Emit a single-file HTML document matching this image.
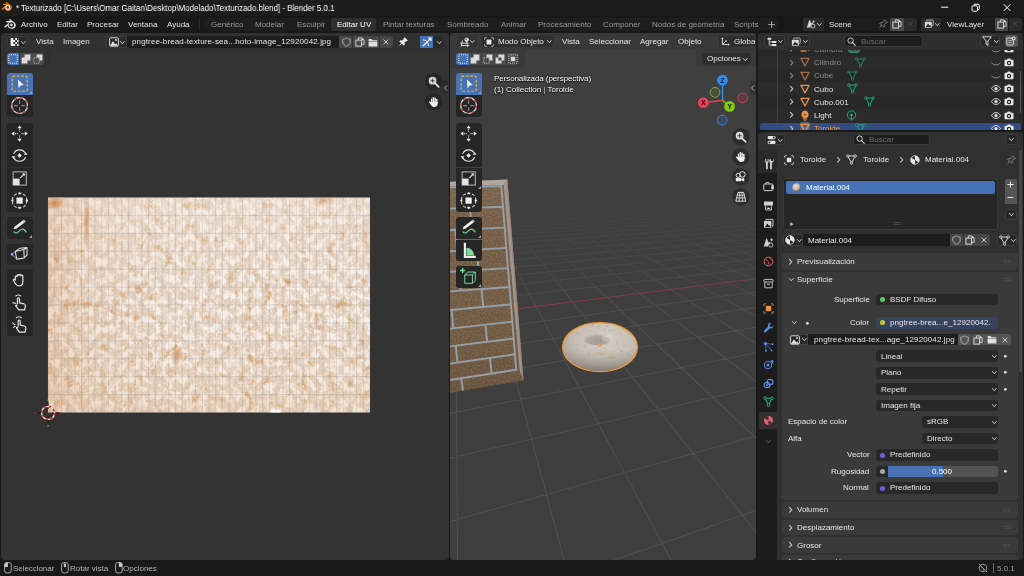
<!DOCTYPE html><html><head><meta charset="utf-8"><title>Blender</title><style>
html,body{margin:0;padding:0;}
body{width:1024px;height:576px;overflow:hidden;background:#191919;position:relative;font-family:"Liberation Sans",sans-serif;}
.t{position:absolute;white-space:nowrap;line-height:12px;height:12px;will-change:transform;}
.b{position:absolute;box-sizing:border-box;}
.area{position:absolute;overflow:hidden;border-radius:4px;}
svg{position:absolute;overflow:visible;}
</style></head><body>
<div class="b" style="left:0px;top:0px;width:1024.00px;height:16.00px;background:#1c1c1c;border-radius:0px;"></div>
<svg style="left:0.6px;top:2.4px;" width="11" height="10" viewBox="0 0 20 18"><path d="M1 12 L9 5.5 H4.5 a1.1 1.1 0 0 1 0-2.2 H11 L9 1.8 a1.1 1.1 0 0 1 1.4-1.7 L18 6 c2 1.8 2.3 5 .5 7.5 c-2.2 3-7 3.6-10 1.4 c-1.6-1.2-2.3-2.7-2.2-4.3 L2.5 13.8 A1.1 1.1 0 0 1 1 12Z" fill="#ea7600"/><circle cx="12.3" cy="9.7" r="4.3" fill="#fff"/><circle cx="12.3" cy="9.7" r="2.5" fill="#265787"/></svg>
<span class="t" style="left:16px;top:2px;color:#fff;font-size:9px;transform:scaleX(.8835);transform-origin:0 50%;">* Texturizado [C:\Users\Omar Gaitan\Desktop\Modelado\Texturizado.blend] - Blender 5.0.1</span>
<svg style="left:0;top:0" width="1024" height="16" viewBox="0 0 1024 16" fill="none" stroke="#fff" stroke-width="1"><path d="M941.2 7.2H948.2"/><rect x="972" y="5.8" width="5.6" height="5.4" rx="1.3"/><path d="M973.8 5.6V5.2a1 1 0 0 1 1-1H978a1.3 1.3 0 0 1 1.3 1.3V8.6a1 1 0 0 1-1 1H977.8"/><path d="M1003.8 4.3L1010.4 10.9M1010.4 4.3L1003.8 10.9"/></svg>
<div class="b" style="left:0px;top:16px;width:1024.00px;height:17.00px;background:#181818;border-radius:0px;"></div>
<svg style="left:3.6px;top:18.5px;" width="12" height="11" viewBox="0 0 20 18"><path d="M1 12 L9 5.5 H4.5 a1.1 1.1 0 0 1 0-2.2 H11 L9 1.8 a1.1 1.1 0 0 1 1.4-1.7 L18 6 c2 1.8 2.3 5 .5 7.5 c-2.2 3-7 3.6-10 1.4 c-1.6-1.2-2.3-2.7-2.2-4.3 L2.5 13.8 A1.1 1.1 0 0 1 1 12Z" fill="#e4e4e4"/><circle cx="12.3" cy="9.7" r="4.4" fill="#181818"/><circle cx="12.3" cy="9.7" r="2.2" fill="#e4e4e4"/></svg>
<span class="t" style="left:20.8px;top:18.50px;color:#e4e4e4;font-size:8px;">Archivo</span>
<span class="t" style="left:57px;top:18.50px;color:#e4e4e4;font-size:8px;">Editar</span>
<span class="t" style="left:86.8px;top:18.50px;color:#e4e4e4;font-size:8px;">Procesar</span>
<span class="t" style="left:128px;top:18.50px;color:#e4e4e4;font-size:8px;">Ventana</span>
<span class="t" style="left:167px;top:18.50px;color:#e4e4e4;font-size:8px;">Ayuda</span>
<div class="b" style="left:198.5px;top:18px;width:1.00px;height:12.00px;background:#2a2a2a;border-radius:0px;"></div>
<div class="b" style="left:204px;top:17.5px;width:574.20px;height:13.50px;background:#1e1e1e;border-radius:3px;"></div>
<div class="b" style="left:331px;top:17.5px;width:45.00px;height:13.00px;background:#303030;border-radius:3px;"></div>
<span class="t" style="left:210.5px;top:18.50px;color:#999999;font-size:8px;">Genérico</span>
<span class="t" style="left:255px;top:18.50px;color:#999999;font-size:8px;">Modelar</span>
<span class="t" style="left:296.8px;top:18.50px;color:#999999;font-size:8px;">Esculpir</span>
<span class="t" style="left:337px;top:18.50px;color:#ffffff;font-size:8px;">Editar UV</span>
<span class="t" style="left:382.8px;top:18.50px;color:#999999;font-size:8px;">Pintar texturas</span>
<span class="t" style="left:447px;top:18.50px;color:#999999;font-size:8px;">Sombreado</span>
<span class="t" style="left:500.5px;top:18.50px;color:#999999;font-size:8px;">Animar</span>
<span class="t" style="left:537.5px;top:18.50px;color:#999999;font-size:8px;">Procesamiento</span>
<span class="t" style="left:602.5px;top:18.50px;color:#999999;font-size:8px;">Componer</span>
<span class="t" style="left:651.5px;top:18.50px;color:#999999;font-size:8px;">Nodos de geometría</span>
<span class="t" style="left:734px;top:18.50px;color:#999999;font-size:8px;">Scripts</span>
<svg style="left:768px;top:21px" width="7.2" height="7.2" viewBox="0 0 7.2 7.2"><path d="M3.6 .2V7M.2 3.6H7" stroke="#b4b4b4" stroke-width=".9"/></svg>
<div class="b" style="left:803px;top:17.5px;width:20.50px;height:13.00px;background:#2b2b2b;border-radius:3px 0 0 3pxpx;"></div>
<div class="b" style="left:823.5px;top:17.5px;width:66.50px;height:13.00px;background:#1d1d1d;border-radius:0px;"></div>
<div class="b" style="left:890px;top:17.5px;width:13.60px;height:13.00px;background:#474747;border-radius:0px;"></div>
<div class="b" style="left:903.8px;top:17.5px;width:13.00px;height:13.00px;background:#2b2b2b;border-radius:0 3px 3px 0px;"></div>
<svg style="left:805.5px;top:19px;" width="10" height="10" viewBox="0 0 10 10"><path d="M1.2 8.6L3.6 1.2L5.2 4.8L6.2 3.6L6.8 5" fill="#d8d8d8" stroke="#d8d8d8" stroke-width=".6" stroke-linejoin="round"/><path d="M1.2 8.6H4.6L4.8 5Z" fill="#d8d8d8"/><circle cx="6.9" cy="7" r="2" fill="none" stroke="#d8d8d8" stroke-width=".9"/><circle cx="7.6" cy="2.6" r="1" fill="#d8d8d8"/></svg>
<svg style="left:816.7px;top:22.7px;" width="4.6" height="3.4" viewBox="0 0 4.6 3.4"><path d="M.4 .5L2.3 2.8L4.199999999999999 .5" fill="none" stroke="#c6c6c6" stroke-width="1.0" stroke-linecap="round" stroke-linejoin="round"/></svg>
<span class="t" style="left:828.8px;top:18.50px;color:#e0e0e0;font-size:8px;">Scene</span>
<svg style="left:878px;top:19.3px;" width="10" height="10" viewBox="0 0 10 10"><g transform="rotate(45 5 5)"><path d="M3.2 .8H6.8V1.8L6.2 2.3V4.6L7.8 6V6.8H2.2V6L3.8 4.6V2.3L3.2 1.8Z" fill="none" stroke="#8a8a8a" stroke-width=".8" stroke-linejoin="round"/><path d="M5 6.8V9.8" stroke="#8a8a8a" stroke-width=".9"/></g></svg>
<svg style="left:892px;top:19.2px;" width="10" height="10" viewBox="0 0 10 10"><path d="M3.3 3.1V.9H6.8L9.1 3.2V7.3H6.5" fill="none" stroke="#e0e0e0" stroke-width=".9" stroke-linejoin="miter"/><path d="M6.7 .7L9.3 3.3H6.7Z" fill="#e0e0e0"/><rect x=".9" y="3.1" width="5.6" height="6" fill="none" stroke="#e0e0e0" stroke-width=".9"/></svg>
<svg style="left:906.3px;top:20.2px;" width="8" height="8" viewBox="0 0 8 8"><path d="M1.4 1.4L6.6 6.6M6.6 1.4L1.4 6.6" stroke="#4a4a4a" stroke-width="0.85"/></svg>
<div class="b" style="left:920.5px;top:17.5px;width:20.50px;height:13.00px;background:#2b2b2b;border-radius:3px 0 0 3pxpx;"></div>
<div class="b" style="left:941px;top:17.5px;width:53.80px;height:13.00px;background:#1d1d1d;border-radius:0px;"></div>
<div class="b" style="left:994.8px;top:17.5px;width:13.60px;height:13.00px;background:#474747;border-radius:0px;"></div>
<div class="b" style="left:1008.6px;top:17.5px;width:13.40px;height:13.00px;background:#2b2b2b;border-radius:0 3px 3px 0px;"></div>
<svg style="left:923.5px;top:19px;" width="10" height="10" viewBox="0 0 10 10"><path d="M2.6 2.2V1.6a.6.6 0 0 1 .6-.6H8.6a.6.6 0 0 1 .6.6V6a.6.6 0 0 1-.6.6H8" fill="none" stroke="#bdbdbd" stroke-width=".9"/><rect x=".8" y="2.8" width="7" height="6" rx=".7" fill="#d8d8d8"/><path d="M1.8 8L4 4.6L5.4 6.6L6.2 5.8L7 8Z" fill="#2b2b2b"/></svg>
<svg style="left:934.7px;top:22.7px;" width="4.6" height="3.4" viewBox="0 0 4.6 3.4"><path d="M.4 .5L2.3 2.8L4.199999999999999 .5" fill="none" stroke="#c6c6c6" stroke-width="1.0" stroke-linecap="round" stroke-linejoin="round"/></svg>
<span class="t" style="left:946.8px;top:18.50px;color:#e0e0e0;font-size:8px;">ViewLayer</span>
<svg style="left:996.5px;top:19.2px;" width="10" height="10" viewBox="0 0 10 10"><path d="M3.3 3.1V.9H6.8L9.1 3.2V7.3H6.5" fill="none" stroke="#e0e0e0" stroke-width=".9" stroke-linejoin="miter"/><path d="M6.7 .7L9.3 3.3H6.7Z" fill="#e0e0e0"/><rect x=".9" y="3.1" width="5.6" height="6" fill="none" stroke="#e0e0e0" stroke-width=".9"/></svg>
<svg style="left:1011px;top:20.2px;" width="8" height="8" viewBox="0 0 8 8"><path d="M1.4 1.4L6.6 6.6M6.6 1.4L1.4 6.6" stroke="#4a4a4a" stroke-width="0.85"/></svg>
<div class="area" style="left:1px;top:33.1px;width:447.6px;height:527.3px;background:#333333;"></div>
<svg width="1024" height="576" style="left:0;top:0" viewBox="0 0 1024 576">
<defs>
<filter id="bread" x="0" y="0" width="100%" height="100%" color-interpolation-filters="sRGB">
 <feFlood flood-color="#e2cfbd" result="base"/>
 <feTurbulence type="fractalNoise" baseFrequency="0.15 0.12" numOctaves="3" seed="7" result="n1"/>
 <feColorMatrix in="n1" type="matrix" values="0 0 0 0 0.97  0 0 0 0 0.935  0 0 0 0 0.905  -5.5 0 0 0 3.0" result="c1"/>
 <feTurbulence type="fractalNoise" baseFrequency="0.11 0.09" numOctaves="3" seed="23" result="n3"/>
 <feColorMatrix in="n3" type="matrix" values="0 0 0 0 0.85  0 0 0 0 0.69  0 0 0 0 0.51  0 0 5 0 -3.0" result="c3"/>
 <feTurbulence type="fractalNoise" baseFrequency="0.4" numOctaves="2" seed="11" result="n2"/>
 <feColorMatrix in="n2" type="matrix" values="0 0 0 0 0.98  0 0 0 0 0.95  0 0 0 0 0.92  0 3 0 0 -1.62" result="c2"/>
 <feMerge><feMergeNode in="base"/><feMergeNode in="c1"/><feMergeNode in="c3"/><feMergeNode in="c2"/></feMerge>
</filter>
<linearGradient id="bl" x1="0" x2="1" y1="0" y2="0"><stop offset="0" stop-color="#c98450" stop-opacity=".55"/><stop offset=".16" stop-color="#d09a6a" stop-opacity=".22"/><stop offset=".4" stop-color="#d8a878" stop-opacity="0"/></linearGradient>
<linearGradient id="bt" x1="0" x2="0" y1="0" y2="1"><stop offset="0" stop-color="#f3e6dc" stop-opacity=".35"/><stop offset=".5" stop-color="#f3e6dc" stop-opacity="0"/><stop offset="1" stop-color="#d9a877" stop-opacity=".18"/></linearGradient>
<radialGradient id="wsp"><stop offset="0" stop-color="#fff" stop-opacity="1"/><stop offset="1" stop-color="#fff" stop-opacity="0"/></radialGradient>
<radialGradient id="osp"><stop offset="0" stop-color="#c67a3c" stop-opacity=".85"/><stop offset="1" stop-color="#c67a3c" stop-opacity="0"/></radialGradient>
<clipPath id="uvc"><rect x="48.0" y="197.5" width="322.0" height="215.0"/></clipPath>
</defs>
<g clip-path="url(#uvc)">
<rect x="48.0" y="197.5" width="322.0" height="215.0" filter="url(#bread)"/>
<rect x="48.0" y="197.5" width="322.0" height="215.0" fill="url(#bt)"/>
<rect x="48.0" y="197.5" width="322.0" height="215.0" fill="url(#bl)" opacity=".4"/>
<ellipse cx="55" cy="203" rx="9" ry="7" fill="url(#osp)"/>
<ellipse cx="86.5" cy="222" rx="3" ry="26" fill="url(#osp)" opacity=".8"/>
<ellipse cx="325" cy="200" rx="14" ry="8" fill="url(#osp)" opacity=".45"/>
<ellipse cx="366" cy="235" rx="5" ry="22" fill="url(#osp)" opacity=".35"/>
<ellipse cx="177" cy="355" rx="6" ry="11" fill="url(#osp)" opacity=".7"/>
<ellipse cx="57" cy="260" rx="4" ry="10" fill="url(#osp)" opacity=".5"/>
<ellipse cx="138" cy="288" rx="4" ry="4" fill="url(#osp)" opacity="0.55"/>
<ellipse cx="136" cy="318" rx="5" ry="4" fill="url(#osp)" opacity="0.5"/>
<ellipse cx="288" cy="282" rx="5" ry="4" fill="url(#osp)" opacity="0.55"/>
<ellipse cx="296" cy="312" rx="4" ry="3" fill="url(#osp)" opacity="0.45"/>
<ellipse cx="316" cy="320" rx="4" ry="4" fill="url(#osp)" opacity="0.5"/>
<ellipse cx="320" cy="328" rx="5" ry="4" fill="url(#osp)" opacity="0.5"/>
<ellipse cx="362" cy="342" rx="4" ry="5" fill="url(#osp)" opacity="0.6"/>
<ellipse cx="158" cy="220" rx="3" ry="3" fill="url(#osp)" opacity="0.45"/>
<ellipse cx="248" cy="318" rx="6" ry="4" fill="url(#osp)" opacity="0.45"/>
<ellipse cx="212" cy="398" rx="5" ry="4" fill="url(#osp)" opacity="0.5"/>
<ellipse cx="350" cy="384" rx="4" ry="5" fill="url(#osp)" opacity="0.5"/>
<ellipse cx="102" cy="268" rx="4" ry="3" fill="url(#osp)" opacity="0.4"/>
<ellipse cx="88" cy="318" rx="4" ry="4" fill="url(#osp)" opacity="0.4"/>
<ellipse cx="230" cy="330" rx="3" ry="3" fill="url(#osp)" opacity="0.4"/>
<ellipse cx="205" cy="300" rx="3" ry="3" fill="url(#osp)" opacity="0.4"/>
<ellipse cx="275.5" cy="412" rx="9" ry="5.5" fill="url(#wsp)"/><ellipse cx="275.5" cy="412.5" rx="5" ry="3" fill="#fff" opacity=".8"/>
</g>
<path d="M48.00 197.5V412.5M54.71 197.5V412.5M61.42 197.5V412.5M68.12 197.5V412.5M74.83 197.5V412.5M81.54 197.5V412.5M88.25 197.5V412.5M94.96 197.5V412.5M101.67 197.5V412.5M108.38 197.5V412.5M115.08 197.5V412.5M121.79 197.5V412.5M128.50 197.5V412.5M135.21 197.5V412.5M141.92 197.5V412.5M148.62 197.5V412.5M155.33 197.5V412.5M162.04 197.5V412.5M168.75 197.5V412.5M175.46 197.5V412.5M182.17 197.5V412.5M188.88 197.5V412.5M195.58 197.5V412.5M202.29 197.5V412.5M209.00 197.5V412.5M215.71 197.5V412.5M222.42 197.5V412.5M229.12 197.5V412.5M235.83 197.5V412.5M242.54 197.5V412.5M249.25 197.5V412.5M255.96 197.5V412.5M262.67 197.5V412.5M269.38 197.5V412.5M276.08 197.5V412.5M282.79 197.5V412.5M289.50 197.5V412.5M296.21 197.5V412.5M302.92 197.5V412.5M309.62 197.5V412.5M316.33 197.5V412.5M323.04 197.5V412.5M329.75 197.5V412.5M336.46 197.5V412.5M343.17 197.5V412.5M349.88 197.5V412.5M356.58 197.5V412.5M363.29 197.5V412.5M370.00 197.5V412.5M48.0 197.50H370.0M48.0 215.42H370.0M48.0 233.33H370.0M48.0 251.25H370.0M48.0 269.17H370.0M48.0 287.08H370.0M48.0 305.00H370.0M48.0 322.92H370.0M48.0 340.83H370.0M48.0 358.75H370.0M48.0 376.67H370.0M48.0 394.58H370.0M48.0 412.50H370.0" stroke="#7a7a7a" stroke-opacity=".36" stroke-width=".55" fill="none"/>
<g fill="none"><path d="M36.6 412.9H44.1M52.1 412.9H59.6M48.1 401.4V408.9M48.1 416.9V424.4" stroke="#141414" stroke-width="1"/><path d="M34.6 412.9H36.3M59.900000000000006 412.9H61.6" stroke="#b0304a" stroke-width="1.2"/><path d="M48.1 399.4V401.09999999999997M48.1 424.7V426.4" stroke="#7fb020" stroke-width="1.2"/><circle cx="48.1" cy="412.9" r="6.5" stroke="#e8e8e8" stroke-width="1.4"/><circle cx="48.1" cy="412.9" r="6.5" stroke="#d42222" stroke-width="1.4" stroke-dasharray="2.55 2.55"/></g>
</svg>
<div class="b" style="left:1px;top:33.1px;width:447.60px;height:17.40px;background:#313131;border-radius:4px 4px 0 0px;"></div>
<div class="b" style="left:1px;top:50px;width:49.00px;height:17.50px;background:#313131;border-radius:0 0 4px 0px;"></div>
<div class="b" style="left:7px;top:36px;width:20.00px;height:11.80px;background:#2a2a2a;border-radius:3px;border:0.5px solid #3b3b3b;"></div>
<svg style="left:10px;top:37px;" width="10" height="10" viewBox="0 0 10 10"><path d="M1.2 1H8.6V9H1.2a.8.8 0 0 1-.6-.8V1.8A.8.8 0 0 1 1.2 1Z" fill="#f0f0f0"/><path d="M3.4 1H5.2V3H3.4ZM7 1H8.6V3H7ZM5.2 3H7V5H5.2ZM3.4 5H5.2V7H3.4ZM7 5H8.6V7H7ZM5.2 7H7V9H5.2Z" fill="#2a2a2a"/></svg>
<svg style="left:20.9px;top:40.6px;" width="4.6" height="3.4" viewBox="0 0 4.6 3.4"><path d="M.4 .5L2.3 2.8L4.199999999999999 .5" fill="none" stroke="#c6c6c6" stroke-width="1.0" stroke-linecap="round" stroke-linejoin="round"/></svg>
<span class="t" style="left:36px;top:36.30px;color:#e0e0e0;font-size:8px;">Vista</span>
<span class="t" style="left:63px;top:36.30px;color:#e0e0e0;font-size:8px;">Imagen</span>
<div class="b" style="left:106.3px;top:36px;width:20.50px;height:11.80px;background:#2a2a2a;border-radius:3px 0 0 3pxpx;border:0.5px solid #3b3b3b;"></div>
<svg style="left:108.5px;top:37px;" width="10" height="10" viewBox="0 0 10 10"><rect x=".6" y=".8" width="8.8" height="8.4" rx="1" fill="none" stroke="#e6e6e6" stroke-width=".9"/><path d="M1 8.8L4 4.2L6.2 7.4L7.2 6.2L9 8.8Z" fill="#e6e6e6"/><circle cx="7" cy="3" r=".9" fill="#e6e6e6"/></svg>
<svg style="left:119.7px;top:40.6px;" width="4.6" height="3.4" viewBox="0 0 4.6 3.4"><path d="M.4 .5L2.3 2.8L4.199999999999999 .5" fill="none" stroke="#c6c6c6" stroke-width="1.0" stroke-linecap="round" stroke-linejoin="round"/></svg>
<div class="b" style="left:127px;top:36px;width:212.00px;height:11.80px;background:#1d1d1d;border-radius:0px;"></div>
<span class="t" style="left:131.8px;top:36.30px;color:#e6e6e6;font-size:8px;letter-spacing:.13px;">pngtree-bread-texture-sea...hoto-image_12920042.jpg</span>
<div class="b" style="left:339.2px;top:36px;width:13.30px;height:11.80px;background:#474747;border-radius:0px;"></div>
<div class="b" style="left:352.9px;top:36px;width:13.10px;height:11.80px;background:#474747;border-radius:0px;"></div>
<div class="b" style="left:366.4px;top:36px;width:13.10px;height:11.80px;background:#474747;border-radius:0px;"></div>
<div class="b" style="left:379.9px;top:36px;width:13.10px;height:11.80px;background:#474747;border-radius:0 3px 3px 0px;"></div>
<svg style="left:341.5px;top:37px;" width="9" height="10" viewBox="0 0 9 10"><path d="M4.5 .8 C3.2 1.8 2 2.1 .8 2.2 V5 C.8 7.2 2.6 8.6 4.5 9.3 C6.4 8.6 8.2 7.2 8.2 5 V2.2 C7 2.1 5.8 1.8 4.5 .8Z" fill="none" stroke="#b0b0b0" stroke-width=".9"/></svg>
<svg style="left:354.6px;top:37px;" width="10" height="10" viewBox="0 0 10 10"><path d="M3.3 3.1V.9H6.8L9.1 3.2V7.3H6.5" fill="none" stroke="#e0e0e0" stroke-width=".9" stroke-linejoin="miter"/><path d="M6.7 .7L9.3 3.3H6.7Z" fill="#e0e0e0"/><rect x=".9" y="3.1" width="5.6" height="6" fill="none" stroke="#e0e0e0" stroke-width=".9"/></svg>
<svg style="left:368px;top:37.5px;" width="10" height="9" viewBox="0 0 10 9"><path d="M.6 1.6a.6.6 0 0 1 .6-.6H3.6L4.6 2.2H8.8a.6.6 0 0 1 .6.6V3.4H.6Z" fill="#e0e0e0"/><rect x=".6" y="4" width="8.8" height="4.6" rx=".6" fill="#e0e0e0"/></svg>
<svg style="left:382.4px;top:38px;" width="8" height="8" viewBox="0 0 8 8"><path d="M1.6 1.6L6.4 6.4M6.4 1.6L1.6 6.4" stroke="#e0e0e0" stroke-width="0.85"/></svg>
<svg style="left:397.5px;top:37px;" width="10" height="10" viewBox="0 0 10 10"><g transform="rotate(45 5 5)"><path d="M3.2 .8H6.8V1.8L6.2 2.3V4.6L7.8 6V6.8H2.2V6L3.8 4.6V2.3L3.2 1.8Z" fill="#f0f0f0" stroke="#f0f0f0" stroke-width=".8" stroke-linejoin="round"/><path d="M5 6.8V9.8" stroke="#f0f0f0" stroke-width=".9"/></g></svg>
<div class="b" style="left:420px;top:36px;width:13.00px;height:11.80px;background:#4772b3;border-radius:3px 0 0 3pxpx;"></div>
<svg style="left:421.5px;top:37px;" width="10" height="10" viewBox="0 0 10 10"><path d="M1 9L9 1M6 1H9V4" fill="none" stroke="#fff" stroke-width="1.1"/><path d="M1 3C4 3 6 5 6.6 9" fill="none" stroke="#fff" stroke-width="1"/></svg>
<div class="b" style="left:433.3px;top:36px;width:11.20px;height:11.80px;background:#2a2a2a;border-radius:0 3px 3px 0px;"></div>
<svg style="left:436.7px;top:40.6px;" width="4.6" height="3.4" viewBox="0 0 4.6 3.4"><path d="M.4 .5L2.3 2.8L4.199999999999999 .5" fill="none" stroke="#c6c6c6" stroke-width="1.0" stroke-linecap="round" stroke-linejoin="round"/></svg>
<div class="b" style="left:7.0px;top:52.7px;width:12.15px;height:12.30px;background:#4772b3;border-radius:0px;border-radius:3px 0 0 3px;"></div>
<svg style="left:8.3px;top:53.900000000000006px;" width="10" height="10" viewBox="0 0 10 10"><rect x=".8" y=".8" width="8.4" height="8.4" fill="none" stroke="#e8eefb" stroke-width="1" stroke-dasharray="1 1.1"/></svg>
<div class="b" style="left:19.55px;top:52.7px;width:12.15px;height:12.30px;background:#4a4a4a;border-radius:0px;border-radius:0;"></div>
<svg style="left:20.85px;top:53.900000000000006px;" width="10" height="10" viewBox="0 0 10 10"><path d="M3.6 .6H9.4V6.4H6.4V9.4H.6V3.6H3.6Z" fill="#dcdcdc"/></svg>
<div class="b" style="left:32.1px;top:52.7px;width:12.15px;height:12.30px;background:#4a4a4a;border-radius:0px;border-radius:0 3px 3px 0;"></div>
<svg style="left:33.4px;top:53.900000000000006px;" width="10" height="10" viewBox="0 0 10 10"><path d="M3.6 .6H9.4V6.4H6.4V3.6H3.6Z" fill="#dcdcdc"/><rect x=".8" y="3.8" width="5.4" height="5.4" fill="none" stroke="#cfcfcf" stroke-width=".9" stroke-dasharray="1 1.1"/></svg>
<div class="b" style="left:7px;top:73px;width:25.70px;height:22.00px;background:#4772b3;border-radius:0px;border-radius:3px 3px 0 0;"></div><svg style="left:9.550000000000002px;top:74.0px;" width="19.2" height="19.2" viewBox="0 0 16 16"><rect x="1.8" y="1.8" width="12.6" height="12.6" rx="1.4" fill="none" stroke="#eab23f" stroke-width="1" stroke-dasharray="2.3 1.3" stroke-dashoffset="1.1"/><path d="M6.6 4.6L11.5 9.1L8.9 9.5L7.1 12Z" fill="#f2f2f2"/></svg><svg style="left:28.500000000000004px;top:90.8px;" width="3" height="3" viewBox="0 0 3 3"><path d="M3 0V3H0Z" fill="#9a9a9a"/></svg>
<div class="b" style="left:7px;top:95.4px;width:25.70px;height:22.10px;background:#262626;border-radius:0px;border-radius:0 0 3px 3px;"></div><svg style="left:9.550000000000002px;top:96.45px;" width="19.2" height="19.2" viewBox="0 0 16 16"><circle cx="8" cy="8" r="6.6" fill="none" stroke="#f0f0f0" stroke-width="1"/><circle cx="8" cy="8" r="6.6" fill="none" stroke="#c93838" stroke-width="1" stroke-dasharray="2.59 2.59"/><path d="M8 3.4V6.6M8 9.4V12.6M3.4 8H6.6M9.4 8H12.6" stroke="#8a8a8a" stroke-width=".9"/></svg>
<div class="b" style="left:7px;top:122.5px;width:25.70px;height:22.10px;background:#262626;border-radius:0px;border-radius:3px 3px 0 0;"></div><svg style="left:9.550000000000002px;top:123.55000000000001px;" width="19.2" height="19.2" viewBox="0 0 16 16"><path d="M8 1.2L9.8 3.6H6.2ZM8 14.8L9.8 12.4H6.2ZM1.2 8L3.6 6.2V9.8ZM14.8 8L12.4 6.2V9.8Z" fill="#eee"/><path d="M8 4V6.4M8 9.6V12M4 8H6.4M9.6 8H12" stroke="#ddd" stroke-width=".9" stroke-dasharray=".9 .7"/></svg>
<div class="b" style="left:7px;top:145px;width:25.70px;height:22.20px;background:#262626;border-radius:0px;border-radius:0;"></div><svg style="left:9.550000000000002px;top:146.1px;" width="19.2" height="19.2" viewBox="0 0 16 16"><path d="M3 6.6A5.4 5.4 0 0 1 13 6.6" fill="none" stroke="#e4e4e4" stroke-width=".9"/><path d="M13 9.4A5.4 5.4 0 0 1 3 9.4" fill="none" stroke="#e4e4e4" stroke-width=".9"/><path d="M11.6 7.4H14.6L13.1 5.2Z" fill="#eee"/><path d="M1.4 8.6H4.4L2.9 10.8Z" fill="#eee"/><path d="M8 6.1L9.9 8L8 9.9L6.1 8Z" fill="#eee"/></svg>
<div class="b" style="left:7px;top:167.6px;width:25.70px;height:22.20px;background:#262626;border-radius:0px;border-radius:0;"></div><svg style="left:9.550000000000002px;top:168.7px;" width="19.2" height="19.2" viewBox="0 0 16 16"><rect x="2.6" y="2.4" width="11" height="11" fill="none" stroke="#bdbdbd" stroke-width=".8"/><rect x="2.6" y="8" width="5.4" height="5.4" fill="#e4e4e4"/><path d="M8.6 7.4L11.6 4.4" stroke="#e4e4e4" stroke-width=".9"/><path d="M12.4 3.6L12.2 6L9.9 3.8Z" fill="#e4e4e4"/></svg>
<div class="b" style="left:7px;top:190.2px;width:25.70px;height:22.00px;background:#262626;border-radius:0px;border-radius:0 0 3px 3px;"></div><svg style="left:9.550000000000002px;top:191.2px;" width="19.2" height="19.2" viewBox="0 0 16 16"><circle cx="8" cy="8" r="6.2" fill="none" stroke="#cfcfcf" stroke-width=".9" stroke-dasharray="2.6 1.4"/><rect x="5.4" y="5.4" width="5.2" height="5.2" fill="#eee"/><path d="M8 .8L9.4 2.8H6.6ZM8 15.2L9.4 13.2H6.6ZM.8 8L2.8 6.6V9.4ZM15.2 8L13.2 6.6V9.4Z" fill="#eee"/></svg>
<div class="b" style="left:7px;top:217.2px;width:25.70px;height:21.60px;background:#262626;border-radius:0px;border-radius:3px;"></div><svg style="left:9.550000000000002px;top:218.0px;" width="19.2" height="19.2" viewBox="0 0 16 16"><path d="M3 9.4L3.8 7.2L10.6 2L12.2 3.8L5.2 9Z" fill="#eee"/><path d="M10.6 2L11.6 1.2L13.2 3L12.2 3.8Z" fill="#c4c4c4"/><path d="M3 11.4C5 13.6 6.6 12.2 8.2 10.4C9.8 8.6 11.8 8.6 13.6 12" fill="none" stroke="#6fcf97" stroke-width="1"/></svg><svg style="left:28.500000000000004px;top:234.60000000000002px;" width="3" height="3" viewBox="0 0 3 3"><path d="M3 0V3H0Z" fill="#9a9a9a"/></svg>
<div class="b" style="left:7px;top:243.5px;width:25.70px;height:21.50px;background:#262626;border-radius:0px;border-radius:3px;"></div><svg style="left:9.550000000000002px;top:244.25px;" width="19.2" height="19.2" viewBox="0 0 16 16"><path d="M4.4 6.2L11.6 4.6L14.2 3L8 3.6Z M4.4 6.2L5.6 12.6L11.8 11.6L11.6 4.6 M11.8 11.6L14.2 9.2V3" fill="none" stroke="#e0e0e0" stroke-width=".9" stroke-linejoin="round"/><path d="M1.4 8.6L4.4 6.2M1.4 8.6L5.6 12.6" stroke="#b78ae0" stroke-width=".8"/><circle cx="1.6" cy="8.6" r="1" fill="#c89af0"/></svg>
<div class="b" style="left:7px;top:269.3px;width:25.70px;height:21.70px;background:#262626;border-radius:0px;border-radius:3px 3px 0 0;"></div><svg style="left:9.550000000000002px;top:270.15px;" width="19.2" height="19.2" viewBox="0 0 16 16"><path d="M4.4 8.4V5.6a.8.8 0 0 1 1.5 0V4.6a.8.8 0 0 1 1.6 0V4.4a.8.8 0 0 1 1.6 0V5a.8.8 0 0 1 1.6 0V9.6C10.7 12 9.6 13.2 7.6 13.2C5.8 13.2 5 12.4 4 10.6L2.8 8.6C2.6 7.8 3.6 7.4 4.4 8.4Z" fill="none" stroke="#e6e6e6" stroke-width="1" stroke-linejoin="round"/></svg>
<div class="b" style="left:7px;top:291.4px;width:25.70px;height:22.60px;background:#262626;border-radius:0px;border-radius:0;"></div><svg style="left:9.550000000000002px;top:292.7px;" width="19.2" height="19.2" viewBox="0 0 16 16"><path d="M6.2 9.4V4.8a.85.85 0 0 1 1.7 0V8.2L11.6 9C12.6 9.3 13 10 12.8 11L12.2 14H7.4L5 11.2C4.4 10.4 5.2 9.6 6.2 10.6" fill="none" stroke="#e6e6e6" stroke-width="1" stroke-linejoin="round"/><path d="M2 8.4C3 7.2 4 9.4 5 8.2M4.6 2.8A3 3 0 0 1 9.4 2.8" fill="none" stroke="#e6e6e6" stroke-width=".9"/></svg>
<div class="b" style="left:7px;top:314.4px;width:25.70px;height:21.90px;background:#262626;border-radius:0px;border-radius:0 0 3px 3px;"></div><svg style="left:9.550000000000002px;top:315.35px;" width="19.2" height="19.2" viewBox="0 0 16 16"><path d="M6.8 9.6V5a.85.85 0 0 1 1.7 0V8.4L12 9.2C13 9.5 13.4 10.2 13.2 11.2L12.6 14.2H8L5.6 11.4C5 10.6 5.8 9.8 6.8 10.8" fill="none" stroke="#e6e6e6" stroke-width="1" stroke-linejoin="round"/><path d="M2 6.4L4.4 8.4M2.6 10.4L4.6 9.4M5 2.6A3 3 0 0 1 9.8 2.6" fill="none" stroke="#e6e6e6" stroke-width=".9"/></svg>
<svg style="left:424.7px;top:73.0px;" width="17.6" height="17.6" viewBox="0 0 17.6 17.6"><circle cx="8.8" cy="8.8" r="8.8" fill="#262626"/><g transform="translate(2.8000000000000007 2.8000000000000007)"><circle cx="4.8" cy="4.9" r="3.9" fill="#d4d4d4"/><path d="M7.9 8L10.9 11" stroke="#e8e8e8" stroke-width="1.7" stroke-linecap="round"/><path d="M4.8 2.9V6.9M2.8 4.9H6.8" stroke="#3a3a3a" stroke-width=".9"/></g></svg>
<svg style="left:424.7px;top:92.7px;" width="17.6" height="17.6" viewBox="0 0 17.6 17.6"><circle cx="8.8" cy="8.8" r="8.8" fill="#262626"/><g transform="translate(2.8000000000000007 2.8000000000000007)"><rect x="3.1" y="2.6" width="1.45" height="5.4" rx=".7" fill="#eee"/><rect x="4.85" y="1.3" width="1.45" height="6.4" rx=".7" fill="#eee"/><rect x="6.6" y="1.6" width="1.45" height="6.4" rx=".7" fill="#eee"/><rect x="8.35" y="3" width="1.4" height="5.4" rx=".7" fill="#eee"/><path d="M3.1 6.4H9.75V8.2C9.75 10.2 8.4 11.2 6.6 11.2C5 11.2 4.2 10.6 3.4 9.4L1.3 6.6C.9 5.8 1.9 5.2 2.5 6L3.1 6.8Z" fill="#eee"/></g></svg>
<div class="b" style="left:442.6px;top:81.3px;width:5.40px;height:12.20px;background:#2a2a2a;border-radius:3px 0 0 3pxpx;"></div>
<svg style="left:443.6px;top:84.5px;" width="3.4" height="6" viewBox="0 0 3.4 6"><path d="M3 .4L.6 3L3 5.6" fill="none" stroke="#c4c4c4" stroke-width=".9"/></svg>
<div class="area" style="left:450px;top:33.1px;width:306px;height:527.3px;background:#3f3f3f;">
<svg width="1024" height="576" style="left:-450px;top:-33.1px" viewBox="0 0 1024 576">
<defs>
<linearGradient id="gfade" x1="0" x2="0" y1="185" y2="340" gradientUnits="userSpaceOnUse"><stop offset="0" stop-color="#fff" stop-opacity="0"/><stop offset=".3" stop-color="#fff" stop-opacity=".3"/><stop offset="1" stop-color="#fff" stop-opacity="1"/></linearGradient>
<mask id="gm" maskUnits="userSpaceOnUse" x="440" y="30" width="330" height="540"><rect x="440" y="30" width="330" height="540" fill="url(#gfade)"/></mask>
<filter id="brk" x="0" y="0" width="100%" height="100%" color-interpolation-filters="sRGB">
 <feTurbulence type="fractalNoise" baseFrequency="0.55" numOctaves="2" seed="5"/>
 <feColorMatrix type="matrix" values="0.30 0 0 0 0.32  0.26 0 0 0 0.245  0.22 0 0 0 0.175  0 0 0 0 1" result="c"/>
 <feComposite in="c" in2="SourceAlpha" operator="in"/>
</filter>
<filter id="don" x="-5%" y="-5%" width="110%" height="110%" color-interpolation-filters="sRGB">
 <feTurbulence type="fractalNoise" baseFrequency="0.25" numOctaves="2" seed="9" result="n"/>
 <feColorMatrix in="n" type="matrix" values="0 0 0 0 0.80  0 0 0 0 0.62  0 0 0 0 0.46  0 2.2 0 0 -1.25" result="c"/>
 <feComposite in="c" in2="SourceAlpha" operator="in" result="cc"/>
 <feMerge><feMergeNode in="SourceGraphic"/><feMergeNode in="cc"/></feMerge>
</filter>
<radialGradient id="dg" cx="0.56" cy="0.36" r="0.72"><stop offset="0" stop-color="#d6cfc8"/><stop offset=".55" stop-color="#c6bfb7"/><stop offset=".85" stop-color="#aca49c"/><stop offset="1" stop-color="#968e86"/></radialGradient>
<radialGradient id="dh" cx="0.5" cy="0.62" r="0.6"><stop offset="0" stop-color="#a39b93"/><stop offset=".65" stop-color="#b0a8a0"/><stop offset="1" stop-color="#c9c2bb" stop-opacity="0"/></radialGradient>
<linearGradient id="dsh" x1="0" x2="0" y1="322" y2="372" gradientUnits="userSpaceOnUse"><stop offset="0" stop-color="#fff" stop-opacity=".06"/><stop offset=".55" stop-color="#6a625a" stop-opacity="0"/><stop offset=".8" stop-color="#6a625a" stop-opacity=".22"/><stop offset="1" stop-color="#4a443e" stop-opacity=".42"/></linearGradient>
<linearGradient id="wallg" x1="0" x2="0" y1="180" y2="395" gradientUnits="userSpaceOnUse"><stop offset="0" stop-color="#d8c4a8" stop-opacity=".09"/><stop offset=".45" stop-color="#806040" stop-opacity="0"/><stop offset="1" stop-color="#000" stop-opacity=".10"/></linearGradient>
</defs>
<g mask="url(#gm)"><path d="M111.3 187.2L765.5 172.5M104.8 187.9L769.1 172.7M98.0 188.5L772.7 172.9M91.0 189.2L776.4 173.2M83.7 189.9L780.2 173.4M76.1 190.7L784.1 173.6M68.2 191.5L788.1 173.9M60.0 192.3L792.2 174.1M51.4 193.1L796.4 174.4M42.4 194.0L800.7 174.7M33.0 194.9L805.1 174.9M23.1 195.9L809.6 175.2M12.8 196.9L814.2 175.5M2.0 198.0L819.0 175.8M-9.3 199.1L823.9 176.1M-21.3 200.2L828.9 176.4M-33.8 201.5L834.0 176.7M-47.1 202.8L839.3 177.0M-61.1 204.2L844.8 177.4M-75.9 205.6L850.4 177.7M-91.5 207.2L856.2 178.1M-108.2 208.8L862.1 178.4M-125.8 210.5L868.2 178.8M-144.6 212.4L874.5 179.2M-164.7 214.3L881.0 179.6M-186.1 216.5L887.7 180.0M-209.1 218.7L894.7 180.4M-233.8 221.1L901.8 180.9M-260.5 223.8L909.2 181.3M-289.2 226.6L916.8 181.8M-320.4 229.7L924.7 182.3M-354.3 233.0L932.9 182.8M-391.3 236.6L941.3 183.3M-431.8 240.6L950.1 183.8M-476.5 245.0L959.2 184.4M-525.8 249.8L968.6 184.9M-580.7 255.2L978.3 185.5M-642.1 261.3L988.5 186.2M-711.2 268.1L999.0 186.8M-789.7 275.8L1010.0 187.5M-879.4 284.6L1021.5 188.2M-983.1 294.8L1033.4 188.9M-1104.3 306.7L1045.8 189.7M-1247.8 320.8L1058.8 190.5M-1420.4 337.8L1072.3 191.3M-1631.9 358.6L1086.5 192.2M-1897.3 384.7L1101.3 193.1M-2240.0 418.3L1116.9 194.0M-2699.5 463.5L1133.2 195.0M-3348.0 527.3L1150.3 196.1M-4332.2 624.0L1168.4 197.2M-6003.8 788.3L1187.3 198.3M-9469.2 1129.0L1207.4 199.6M-20960.0 2258.5L1228.5 200.9M-45527.1 4844.6L1250.9 202.2M-63661.6 7136.5L1274.6 203.7M-49311.6 6053.9L1299.8 205.2M-30708.0 4650.3L1355.0 208.6M-41031.2 6739.3L1385.5 210.5M-30602.1 5760.1L1418.0 212.5M-22843.1 5031.6L1452.9 214.6M-30424.9 7617.3L1490.5 216.9M-20511.2 6379.1L1531.0 219.4M-13391.6 5489.9L1574.8 222.1M-8030.7 4820.4L1622.2 225.0M-7735.6 7162.8L1673.9 228.1M-1819.6 6051.0L1730.4 231.6M204.2 178.1L-50404.7 5152.9M211.6 177.9L-24848.7 2702.8M219.0 177.8L-30828.7 3385.9M226.3 177.7L-41207.4 4571.5M233.5 177.6L-63661.6 7136.5M240.6 177.4L-26133.9 3129.9M247.7 177.3L-33898.0 4109.4M254.7 177.2L-49311.6 6053.9M261.6 177.0L-22111.8 2910.7M268.5 176.9L-27949.3 3733.3M275.3 176.8L-38774.2 5258.8M282.1 176.7L-18627.4 2720.7M288.8 176.6L-23013.7 3421.3M295.4 176.4L-30708.0 4650.3M302.0 176.3L-47718.2 7367.2M308.5 176.2L-18852.7 3158.2M315.0 176.1L-24335.1 4169.4M321.4 176.0L-35403.6 6210.9M327.8 175.9L-15297.3 2933.5M334.1 175.7L-19172.8 3779.9M340.3 175.6L-26457.3 5371.0M346.5 175.5L-12224.1 2739.2M352.6 175.4L-14906.2 3458.0M358.7 175.3L-19663.7 4733.1M364.7 175.2L-30424.9 7617.3M370.7 175.1L-11320.7 3187.5M376.7 175.0L-14329.1 4232.2M382.5 174.9L-20511.2 6379.1M388.4 174.8L-8265.3 2957.0M394.2 174.7L-10029.2 3828.5M399.9 174.6L-13391.6 5489.9M405.6 174.5L-5630.6 2758.2M411.2 174.4L-6489.5 3496.2M416.8 174.3L-8030.7 4820.4M422.4 174.2L-3335.2 2585.0M427.9 174.1L-3524.8 3217.8M433.3 174.0L-3848.4 4298.0M438.8 173.9L-4526.1 6559.7M444.1 173.8L-1005.5 2981.3M449.5 173.7L-494.7 3879.2M454.8 173.6L493.5 5616.3M460.0 173.5L1161.7 2777.8M465.2 173.4L1373.2 1879.6M470.4 173.3L1476.9 1438.9M475.5 173.2L1538.5 1177.2M480.6 173.1L1579.3 1003.8M485.6 173.0L1608.4 880.5M490.6 172.9L1630.1 788.3M495.6 172.8L1646.9 716.7M500.5 172.7L1660.3 659.6M505.4 172.7L1671.3 612.9M510.3 172.6L1680.5 574.1M515.1 172.5L1688.2 541.3M519.9 172.4L1694.8 513.1M524.6 172.3L1700.6 488.8M529.3 172.2L1705.6 467.5M534.0 172.1L1710.0 448.7M538.6 172.1L1713.9 432.0M543.2 172.0L1717.4 417.1M547.8 171.9L1720.6 403.7M552.4 171.8L1723.4 391.6M556.9 171.7L1726.0 380.5M561.3 171.6L1728.4 370.5M565.8 171.6L1730.6 361.2M570.2 171.5L1732.6 352.7M574.5 171.4L1734.4 344.9M578.9 171.3L1736.1 337.7M583.2 171.3L1737.7 330.9M587.5 171.2L1739.2 324.7M591.7 171.1L1740.6 318.8M596.0 171.0L1741.9 313.3M600.1 170.9L1743.1 308.2M604.3 170.9L1744.2 303.4M608.4 170.8L1745.3 298.9M612.5 170.7L1746.3 294.6M616.6 170.7L1747.2 290.6M620.7 170.6L1748.1 286.7M624.7 170.5L1749.0 283.1M628.7 170.4L1749.8 279.7M632.6 170.4L1750.5 276.5M636.6 170.3L1751.3 273.4M640.5 170.2L1752.0 270.4M644.4 170.2L1752.6 267.6M648.2 170.1L1753.3 264.9M652.0 170.0L1753.9 262.3M655.8 169.9L1754.4 259.9M659.6 169.9L1755.0 257.5M663.4 169.8L1755.5 255.3M667.1 169.7L1756.0 253.1M670.8 169.7L1756.5 251.1M674.5 169.6L1757.0 249.1M678.1 169.5L1757.4 247.2M681.8 169.5L1757.9 245.3M685.4 169.4L1758.3 243.5M689.0 169.3L1758.7 241.8M692.5 169.3L1759.1 240.2M696.0 169.2L1759.5 238.6M699.6 169.2L1759.8 237.1M703.1 169.1L1760.2 235.6M706.5 169.0L1760.5 234.1" stroke="#505050" stroke-width="1.1" fill="none"/>
<path d="M-38774.2 5258.8L1408.7 196.5" stroke="#9c3b4a" stroke-width="1" fill="none"/></g>
<g>
<path d="M450.0 182L507.2 179.8L523.2 380.2L450.0 392.8Z" fill="#766049"/>
<path d="M450.0 182L507.2 179.8L523.2 380.2L450.0 392.8Z" filter="url(#brk)" opacity=".6"/>
<path d="M450.0 182L507.2 179.8L523.2 380.2L450.0 392.8Z" fill="url(#wallg)"/>
<path d="M450.0 187.4L501.3 186.1M450.0 208.6L503.0 206.8M450.0 230.0L504.6 227.6M450.0 251.2L506.3 247.9M450.0 271.8L507.9 268.1M450.0 291.4L509.4 287.0M450.0 310.0L510.8 304.5M450.0 328.6L512.2 321.6M450.0 346.4L513.6 338.5M450.0 363.6L514.9 354.3M450.0 380.0L516.1 369.8M463.0 187.1L464.6 208.1M470.0 207.9L471.6 229.1M455.5 229.8L457.1 250.8M477.0 249.6L478.6 270.0M459.0 271.2L460.6 290.6M481.6 289.1L483.2 307.0M451.6 309.9L453.2 328.2M485.5 324.6L487.1 341.8M455.8 345.7L457.4 362.5M490.0 357.9L491.6 373.6M461.3 378.3L462.9 390.5M501.2 185L516.3 371" stroke="#94a0a9" stroke-width="1.9" fill="none" stroke-linecap="butt"/>
<path d="M450.0 181.8L507.4 179.6L504.4 185L450.0 186.6Z" fill="#b0a6a0"/>
<path d="M507.4 179.4L523.5 380.4L519.7 370.5L503.6 183.6Z" fill="#a3968c"/>
<path d="M507.4 179.4L523.5 380.4L522.0 377L506.4 181Z" fill="#8e7c6e" opacity=".7"/>
</g>
<g><ellipse cx="600.0" cy="347.2" rx="37.4" ry="24.5" fill="url(#dg)" filter="url(#don)"/>
<ellipse cx="600.0" cy="347.2" rx="37.4" ry="24.5" fill="url(#dsh)"/>
<ellipse cx="597.5" cy="339.2" rx="14" ry="6.2" fill="url(#dh)"/>
<ellipse cx="608" cy="338" rx="6" ry="4" fill="#e6d9ce" opacity=".35"/>
<ellipse cx="600.0" cy="347.2" rx="37.4" ry="24.5" fill="none" stroke="#f39a31" stroke-width="1.2"/>
<circle cx="600" cy="345.5" r="1.5" fill="#f39a31"/></g>
</svg>
</div>
<div class="b" style="left:450px;top:33.1px;width:306.00px;height:17.40px;background:#393939;border-radius:4px 4px 0 0px;"></div>
<div class="b" style="left:450px;top:50px;width:75.00px;height:17.50px;background:#393939;border-radius:0 0 4px 0px;"></div>
<div class="b" style="left:696px;top:50px;width:60.00px;height:17.20px;background:#393939;border-radius:0 0 0 4pxpx;"></div>
<div class="b" style="left:457px;top:35.7px;width:19.70px;height:11.50px;background:#323232;border-radius:3px;"></div>
<svg style="left:459px;top:36.5px;" width="11" height="10" viewBox="0 0 11 10"><path d="M1 6.2H9.6M2 8.6H10.4M3.4 3.6L2.2 9.6M7.6 3.6L8.6 9.6" stroke="#e6e6e6" stroke-width=".9" fill="none"/><circle cx="7.6" cy="2.6" r="2.2" fill="#e6e6e6"/><circle cx="7" cy="2.1" r=".8" fill="#393939"/></svg>
<svg style="left:470.3px;top:40.4px;" width="4.6" height="3.4" viewBox="0 0 4.6 3.4"><path d="M.4 .5L2.3 2.8L4.199999999999999 .5" fill="none" stroke="#c6c6c6" stroke-width="1.0" stroke-linecap="round" stroke-linejoin="round"/></svg>
<div class="b" style="left:481.9px;top:35.7px;width:71.30px;height:11.50px;background:#2e2e2e;border-radius:3px;"></div>
<svg style="left:483.8px;top:36.5px;" width="10" height="10" viewBox="0 0 10 10"><rect x="2.6" y="2.6" width="4.8" height="4.8" fill="#f0f0f0"/><path d="M.6 2.6V1.6a1 1 0 0 1 1-1H2.6M7.4 .6H8.4a1 1 0 0 1 1 1V2.6M9.4 7.4V8.4a1 1 0 0 1-1 1H7.4M2.6 9.4H1.6a1 1 0 0 1-1-1V7.4" fill="none" stroke="#d8d8d8" stroke-width=".9"/></svg>
<span class="t" style="left:497.6px;top:35.50px;color:#e6e6e6;font-size:8px;">Modo Objeto</span>
<svg style="left:546.5px;top:40.4px;" width="4.6" height="3.4" viewBox="0 0 4.6 3.4"><path d="M.4 .5L2.3 2.8L4.199999999999999 .5" fill="none" stroke="#c6c6c6" stroke-width="1.0" stroke-linecap="round" stroke-linejoin="round"/></svg>
<span class="t" style="left:562px;top:35.50px;color:#e6e6e6;font-size:8px;">Vista</span>
<span class="t" style="left:589.3px;top:35.50px;color:#e6e6e6;font-size:8px;">Seleccionar</span>
<span class="t" style="left:640.4px;top:35.50px;color:#e6e6e6;font-size:8px;">Agregar</span>
<span class="t" style="left:678px;top:35.50px;color:#e6e6e6;font-size:8px;">Objeto</span>
<div class="b" style="left:718.5px;top:35.7px;width:37.50px;height:11.50px;background:#2e2e2e;border-radius:3px 0 0 3pxpx;"></div>
<svg style="left:719.8px;top:36.5px;" width="10" height="10" viewBox="0 0 10 10"><path d="M2.4 1V7.6H9" fill="none" stroke="#e6e6e6" stroke-width=".9"/><path d="M2.4 7.6L6 4" stroke="#e6e6e6" stroke-width=".9"/><path d="M2.4 .2L3.6 2H1.2ZM9.8 7.6L8 6.4V8.8ZM6.8 3.2L6.4 5L5 3.6Z" fill="#e6e6e6"/></svg>
<span class="t" style="left:733.6px;top:35.5px;width:21px;overflow:hidden;color:#e6e6e6;font-size:8px;">Global</span>
<div class="b" style="left:456.4px;top:52.7px;width:12.15px;height:12.30px;background:#4772b3;border-radius:0px;border-radius:3px 0 0 3px;"></div>
<svg style="left:457.7px;top:53.900000000000006px;" width="10" height="10" viewBox="0 0 10 10"><rect x=".8" y=".8" width="8.4" height="8.4" fill="none" stroke="#e8eefb" stroke-width="1" stroke-dasharray="1 1.1"/></svg>
<div class="b" style="left:468.95px;top:52.7px;width:12.15px;height:12.30px;background:#4a4a4a;border-radius:0px;border-radius:0;"></div>
<svg style="left:470.25px;top:53.900000000000006px;" width="10" height="10" viewBox="0 0 10 10"><path d="M3.6 .6H9.4V6.4H6.4V9.4H.6V3.6H3.6Z" fill="#dcdcdc"/></svg>
<div class="b" style="left:481.5px;top:52.7px;width:12.15px;height:12.30px;background:#4a4a4a;border-radius:0px;border-radius:0;"></div>
<svg style="left:482.8px;top:53.900000000000006px;" width="10" height="10" viewBox="0 0 10 10"><path d="M3.6 .6H9.4V6.4H6.4V3.6H3.6Z" fill="#dcdcdc"/><rect x=".8" y="3.8" width="5.4" height="5.4" fill="none" stroke="#cfcfcf" stroke-width=".9" stroke-dasharray="1 1.1"/></svg>
<div class="b" style="left:494.04999999999995px;top:52.7px;width:12.15px;height:12.30px;background:#4a4a4a;border-radius:0px;border-radius:0;"></div>
<svg style="left:495.34999999999997px;top:53.900000000000006px;" width="10" height="10" viewBox="0 0 10 10"><path d="M3.4 .6H9.4V6.6H6.6V9.4H.6V3.4H3.4ZM3.4 3.4V6.6H6.6V3.4Z" fill="#dcdcdc" fill-rule="evenodd"/></svg>
<div class="b" style="left:506.59999999999997px;top:52.7px;width:12.15px;height:12.30px;background:#4a4a4a;border-radius:0px;border-radius:0 3px 3px 0;"></div>
<svg style="left:507.9px;top:53.900000000000006px;" width="10" height="10" viewBox="0 0 10 10"><rect x="2.8" y="2.8" width="4.4" height="4.4" fill="#dcdcdc"/><rect x=".8" y=".8" width="8.4" height="8.4" fill="none" stroke="#cfcfcf" stroke-width=".9" stroke-dasharray="1 1.1"/></svg>
<div class="b" style="left:702.4px;top:52.8px;width:48.20px;height:12.20px;background:#2e2e2e;border-radius:3px;"></div>
<span class="t" style="left:707px;top:53.10px;color:#e6e6e6;font-size:8px;">Opciones</span>
<svg style="left:742.9000000000001px;top:57.6px;" width="4.6" height="3.4" viewBox="0 0 4.6 3.4"><path d="M.4 .5L2.3 2.8L4.199999999999999 .5" fill="none" stroke="#c6c6c6" stroke-width="1.0" stroke-linecap="round" stroke-linejoin="round"/></svg>
<div class="b" style="left:456.4px;top:73px;width:25.40px;height:22.00px;background:#4772b3;border-radius:0px;border-radius:3px 3px 0 0;"></div><svg style="left:458.8px;top:74.0px;" width="19.2" height="19.2" viewBox="0 0 16 16"><rect x="1.8" y="1.8" width="12.6" height="12.6" rx="1.4" fill="none" stroke="#eab23f" stroke-width="1" stroke-dasharray="2.3 1.3" stroke-dashoffset="1.1"/><path d="M6.6 4.6L11.5 9.1L8.9 9.5L7.1 12Z" fill="#f2f2f2"/></svg><svg style="left:477.6px;top:90.8px;" width="3" height="3" viewBox="0 0 3 3"><path d="M3 0V3H0Z" fill="#9a9a9a"/></svg>
<div class="b" style="left:456.4px;top:95.4px;width:25.40px;height:22.10px;background:#262626;border-radius:0px;border-radius:0 0 3px 3px;"></div><svg style="left:458.8px;top:96.45px;" width="19.2" height="19.2" viewBox="0 0 16 16"><circle cx="8" cy="8" r="6.6" fill="none" stroke="#f0f0f0" stroke-width="1"/><circle cx="8" cy="8" r="6.6" fill="none" stroke="#c93838" stroke-width="1" stroke-dasharray="2.59 2.59"/><path d="M8 3.4V6.6M8 9.4V12.6M3.4 8H6.6M9.4 8H12.6" stroke="#8a8a8a" stroke-width=".9"/></svg>
<div class="b" style="left:456.4px;top:122.5px;width:25.40px;height:22.10px;background:#262626;border-radius:0px;border-radius:3px 3px 0 0;"></div><svg style="left:458.8px;top:123.55000000000001px;" width="19.2" height="19.2" viewBox="0 0 16 16"><path d="M8 1.2L9.8 3.6H6.2ZM8 14.8L9.8 12.4H6.2ZM1.2 8L3.6 6.2V9.8ZM14.8 8L12.4 6.2V9.8Z" fill="#eee"/><path d="M8 4V6.4M8 9.6V12M4 8H6.4M9.6 8H12" stroke="#ddd" stroke-width=".9" stroke-dasharray=".9 .7"/></svg>
<div class="b" style="left:456.4px;top:145px;width:25.40px;height:22.20px;background:#262626;border-radius:0px;border-radius:0;"></div><svg style="left:458.8px;top:146.1px;" width="19.2" height="19.2" viewBox="0 0 16 16"><path d="M3 6.6A5.4 5.4 0 0 1 13 6.6" fill="none" stroke="#e4e4e4" stroke-width=".9"/><path d="M13 9.4A5.4 5.4 0 0 1 3 9.4" fill="none" stroke="#e4e4e4" stroke-width=".9"/><path d="M11.6 7.4H14.6L13.1 5.2Z" fill="#eee"/><path d="M1.4 8.6H4.4L2.9 10.8Z" fill="#eee"/><path d="M8 6.1L9.9 8L8 9.9L6.1 8Z" fill="#eee"/></svg>
<div class="b" style="left:456.4px;top:167.6px;width:25.40px;height:22.20px;background:#262626;border-radius:0px;border-radius:0;"></div><svg style="left:458.8px;top:168.7px;" width="19.2" height="19.2" viewBox="0 0 16 16"><rect x="2.6" y="2.4" width="11" height="11" fill="none" stroke="#bdbdbd" stroke-width=".8"/><rect x="2.6" y="8" width="5.4" height="5.4" fill="#e4e4e4"/><path d="M8.6 7.4L11.6 4.4" stroke="#e4e4e4" stroke-width=".9"/><path d="M12.4 3.6L12.2 6L9.9 3.8Z" fill="#e4e4e4"/></svg><svg style="left:477.6px;top:185.60000000000002px;" width="3" height="3" viewBox="0 0 3 3"><path d="M3 0V3H0Z" fill="#9a9a9a"/></svg>
<div class="b" style="left:456.4px;top:190.2px;width:25.40px;height:22.00px;background:#262626;border-radius:0px;border-radius:0 0 3px 3px;"></div><svg style="left:458.8px;top:191.2px;" width="19.2" height="19.2" viewBox="0 0 16 16"><circle cx="8" cy="8" r="6.2" fill="none" stroke="#cfcfcf" stroke-width=".9" stroke-dasharray="2.6 1.4"/><rect x="5.4" y="5.4" width="5.2" height="5.2" fill="#eee"/><path d="M8 .8L9.4 2.8H6.6ZM8 15.2L9.4 13.2H6.6ZM.8 8L2.8 6.6V9.4ZM15.2 8L13.2 6.6V9.4Z" fill="#eee"/></svg>
<div class="b" style="left:456.4px;top:217.1px;width:25.40px;height:22.10px;background:#262626;border-radius:0px;border-radius:3px 3px 0 0;"></div><svg style="left:458.8px;top:218.14999999999998px;" width="19.2" height="19.2" viewBox="0 0 16 16"><path d="M3 9.4L3.8 7.2L10.6 2L12.2 3.8L5.2 9Z" fill="#eee"/><path d="M10.6 2L11.6 1.2L13.2 3L12.2 3.8Z" fill="#c4c4c4"/><path d="M3 11.4C5 13.6 6.6 12.2 8.2 10.4C9.8 8.6 11.8 8.6 13.6 12" fill="none" stroke="#6fcf97" stroke-width="1"/></svg><svg style="left:477.6px;top:235.0px;" width="3" height="3" viewBox="0 0 3 3"><path d="M3 0V3H0Z" fill="#9a9a9a"/></svg>
<div class="b" style="left:456.4px;top:239.6px;width:25.40px;height:21.90px;background:#262626;border-radius:0px;border-radius:0 0 3px 3px;"></div><svg style="left:458.8px;top:240.55px;" width="19.2" height="19.2" viewBox="0 0 16 16"><path d="M4 1.4H5.8V12.4H14V14.2H4Z" fill="#eee"/><path d="M6.2 12V5.6A6.4 6.4 0 0 1 12.6 12Z" fill="#7ddba3"/></svg>
<div class="b" style="left:456.4px;top:266.2px;width:25.40px;height:21.70px;background:#262626;border-radius:0px;border-radius:3px;"></div><svg style="left:458.8px;top:267.04999999999995px;" width="19.2" height="19.2" viewBox="0 0 16 16"><path d="M4.8 6.6H11.2L13.6 4.2H7.2Z M4.8 6.6V13.6H11.2V6.6 M11.2 13.6L13.6 11.2V4.2" fill="none" stroke="#7ddba3" stroke-width=".8" stroke-linejoin="round"/><path d="M3 .8V5M.9 2.9H5.1" stroke="#7ddba3" stroke-width="1.1"/></svg><svg style="left:477.6px;top:283.7px;" width="3" height="3" viewBox="0 0 3 3"><path d="M3 0V3H0Z" fill="#9a9a9a"/></svg>
<span class="t" style="left:493.5px;top:72.50px;color:#fff;font-size:8px;text-shadow:0 0 2px #000,0 1px 1px rgba(0,0,0,.8);letter-spacing:-.08px;">Personalizada (perspectiva)</span>
<span class="t" style="left:493.5px;top:83.80px;color:#fff;font-size:8px;text-shadow:0 0 2px #000,0 1px 1px rgba(0,0,0,.8);">(1) Collection <span style="color:#ddd">|</span> Toroide</span>
<svg style="left:695px;top:70px" width="60" height="60" viewBox="695 70 60 60"><circle cx="742.6" cy="98" r="4.9" fill="#6b3a44" fill-opacity=".75" stroke="#c7425a" stroke-width="1"/><circle cx="715" cy="92.4" r="4.9" fill="#4b5a3a" fill-opacity=".75" stroke="#7fa53a" stroke-width="1"/><circle cx="722.2" cy="120.2" r="4.9" fill="#3a4f6b" fill-opacity=".75" stroke="#3d7fd0" stroke-width="1"/><path d="M722.6 100.2L722.5 80.2" stroke="#2f8fef" stroke-width="1.4"/><path d="M722.6 100.2L703.3 102.7" stroke="#f03a5a" stroke-width="1.4"/><path d="M722.6 100.2L729.6 106.4" stroke="#82c814" stroke-width="1.4"/><circle cx="722.5" cy="80.2" r="5.4" fill="#2f8fef"/><circle cx="703.3" cy="102.7" r="5.4" fill="#f03a5a"/><circle cx="729.6" cy="106.4" r="5.4" fill="#82c814"/><text x="703.3" y="105.0" font-size="6.5" font-weight="bold" text-anchor="middle" fill="#111" font-family="Liberation Sans">X</text><text x="729.6" y="108.7" font-size="6.5" font-weight="bold" text-anchor="middle" fill="#111" font-family="Liberation Sans">Y</text><text x="722.5" y="82.5" font-size="6.5" font-weight="bold" text-anchor="middle" fill="#111" font-family="Liberation Sans">Z</text></svg>
<svg style="left:732.2px;top:128.2px;" width="17.6" height="17.6" viewBox="0 0 17.6 17.6"><circle cx="8.8" cy="8.8" r="8.8" fill="#2d2d2d"/><g transform="translate(2.8000000000000007 2.8000000000000007)"><circle cx="4.8" cy="4.9" r="3.9" fill="#d4d4d4"/><path d="M7.9 8L10.9 11" stroke="#e8e8e8" stroke-width="1.7" stroke-linecap="round"/><path d="M4.8 2.9V6.9M2.8 4.9H6.8" stroke="#3a3a3a" stroke-width=".9"/></g></svg>
<svg style="left:732.2px;top:148.2px;" width="17.6" height="17.6" viewBox="0 0 17.6 17.6"><circle cx="8.8" cy="8.8" r="8.8" fill="#2d2d2d"/><g transform="translate(2.8000000000000007 2.8000000000000007)"><rect x="3.1" y="2.6" width="1.45" height="5.4" rx=".7" fill="#eee"/><rect x="4.85" y="1.3" width="1.45" height="6.4" rx=".7" fill="#eee"/><rect x="6.6" y="1.6" width="1.45" height="6.4" rx=".7" fill="#eee"/><rect x="8.35" y="3" width="1.4" height="5.4" rx=".7" fill="#eee"/><path d="M3.1 6.4H9.75V8.2C9.75 10.2 8.4 11.2 6.6 11.2C5 11.2 4.2 10.6 3.4 9.4L1.3 6.6C.9 5.8 1.9 5.2 2.5 6L3.1 6.8Z" fill="#eee"/></g></svg>
<svg style="left:732.2px;top:168.2px;" width="17.6" height="17.6" viewBox="0 0 17.6 17.6"><circle cx="8.8" cy="8.8" r="8.8" fill="#2d2d2d"/><g transform="translate(2.8000000000000007 2.8000000000000007)"><path d="M1 7.2H6.4V10.4H1Z M6.6 8.2L9.4 7V10.6L6.6 9.4Z" fill="#eee"/><circle cx="3.4" cy="4.6" r="2.1" fill="none" stroke="#eee" stroke-width=".9"/><circle cx="7.6" cy="3.6" r="2.8" fill="none" stroke="#eee" stroke-width=".9"/></g></svg>
<svg style="left:732.2px;top:188.2px;" width="17.6" height="17.6" viewBox="0 0 17.6 17.6"><circle cx="8.8" cy="8.8" r="8.8" fill="#2d2d2d"/><g transform="translate(2.8000000000000007 2.8000000000000007)"><path d="M3.2 1.6H8.8L11 10.4H1Z" fill="none" stroke="#eee" stroke-width=".9"/><path d="M5 1.6L4.2 10.4M7 1.6L7.8 10.4M2.6 4.4H9.4M1.8 7.2H10.2" stroke="#eee" stroke-width=".8"/></g></svg>
<div class="b" style="left:750.3px;top:80.5px;width:5.70px;height:14.00px;background:#333;border-radius:3px 0 0 3pxpx;"></div>
<svg style="left:751.4px;top:84.5px;" width="3.4" height="6" viewBox="0 0 3.4 6"><path d="M3 .4L.6 3L3 5.6" fill="none" stroke="#c4c4c4" stroke-width=".9"/></svg>
<div class="area" style="left:757.9px;top:33.1px;width:264.8px;height:97.2px;background:#282828;">
<div style="position:absolute;left:-757.9px;top:-33.1px;width:1024px;height:576px;">
<div class="b" style="left:757.9px;top:33px;width:264.80px;height:17.00px;background:#2e2e2e;border-radius:0px;"></div>
<div class="b" style="left:757.9px;top:55.699999999999996px;width:264.80px;height:13.20px;background:#2b2b2b;border-radius:0px;"></div>
<div class="b" style="left:757.9px;top:82.10000000000001px;width:264.80px;height:13.20px;background:#2b2b2b;border-radius:0px;"></div>
<div class="b" style="left:757.9px;top:108.5px;width:264.80px;height:13.20px;background:#2b2b2b;border-radius:0px;"></div>
<div class="b" style="left:760px;top:122.7px;width:261.00px;height:14.30px;background:#334d80;border-radius:2px;"></div>
<div class="b" style="left:777px;top:50px;width:0.70px;height:73.00px;background:#3c3c3c;border-radius:0px;"></div>
<svg style="left:789.9px;top:46.1px;" width="3.4" height="5.6" viewBox="0 0 3.4 5.6"><path d="M.5 .4L2.8 2.8L.5 5.199999999999999" fill="none" stroke="#8a8a8a" stroke-width="1.1" stroke-linecap="round" stroke-linejoin="round"/></svg>
<svg style="left:800px;top:44.9px;" width="10" height="8" viewBox="0 0 10 8"><path d="M.6 2H6.4V7H.6ZM6.8 4L9.4 2.6V6.4L6.8 5Z" fill="#a06c47"/></svg>
<div class="b" style="left:848px;top:44.9px;width:12.00px;height:8.00px;background:#4f5a58;border-radius:3px;border:0.8px solid #3c8f7c;"></div>
<span class="t" style="left:814.4px;top:43.80px;color:#8c8c8c;font-size:8px;">Camera</span>
<svg style="left:991.3px;top:46.8px;" width="10" height="7" viewBox="0 0 10 7"><path d="M.8 3C2.4 5.6 7.6 5.6 9.2 3" fill="none" stroke="#9a9a9a" stroke-width=".9" stroke-linecap="round"/></svg>
<svg style="left:1004.4px;top:44.4px;" width="10" height="9" viewBox="0 0 10 9"><path d="M3 1.8L3.8 .6H6.2L7 1.8H8.8a.7.7 0 0 1 .7.7V7.6a.7.7 0 0 1-.7.7H1.2a.7.7 0 0 1-.7-.7V2.5a.7.7 0 0 1 .7-.7Z" fill="#e6e6e6"/><circle cx="5" cy="5" r="2.2" fill="#282828"/><circle cx="5" cy="5" r="1.1" fill="#e6e6e6"/></svg>
<svg style="left:789.9px;top:59.5px;" width="3.4" height="5.6" viewBox="0 0 3.4 5.6"><path d="M.5 .4L2.8 2.8L.5 5.199999999999999" fill="none" stroke="#8a8a8a" stroke-width="1.1" stroke-linecap="round" stroke-linejoin="round"/></svg>
<svg style="left:799.8px;top:57.3px;" width="10" height="10" viewBox="0 0 10 10"><path d="M1 1.4H9L5 9Z" fill="none" stroke="#a06c47" stroke-width="1.3" stroke-linejoin="round"/></svg>
<svg style="left:854.6px;top:56.5px;" width="11" height="11" viewBox="0 0 11 11"><path d="M1.8 2H9.2L5.5 9Z" fill="none" stroke="#1a8f72" stroke-width=".9"/><circle cx="1.8" cy="2" r="1.2" fill="#282828" stroke="#1a8f72" stroke-width=".8"/><circle cx="9.2" cy="2" r="1.2" fill="#282828" stroke="#1a8f72" stroke-width=".8"/><circle cx="5.5" cy="9" r="1.2" fill="#282828" stroke="#1a8f72" stroke-width=".8"/></svg>
<span class="t" style="left:814.4px;top:57.20px;color:#8c8c8c;font-size:8px;">Cilindro</span>
<svg style="left:991.3px;top:60.199999999999996px;" width="10" height="7" viewBox="0 0 10 7"><path d="M.8 3C2.4 5.6 7.6 5.6 9.2 3" fill="none" stroke="#9a9a9a" stroke-width=".9" stroke-linecap="round"/></svg>
<svg style="left:1004.4px;top:57.8px;" width="10" height="9" viewBox="0 0 10 9"><path d="M3 1.8L3.8 .6H6.2L7 1.8H8.8a.7.7 0 0 1 .7.7V7.6a.7.7 0 0 1-.7.7H1.2a.7.7 0 0 1-.7-.7V2.5a.7.7 0 0 1 .7-.7Z" fill="#e6e6e6"/><circle cx="5" cy="5" r="2.2" fill="#282828"/><circle cx="5" cy="5" r="1.1" fill="#e6e6e6"/></svg>
<svg style="left:789.9px;top:72.7px;" width="3.4" height="5.6" viewBox="0 0 3.4 5.6"><path d="M.5 .4L2.8 2.8L.5 5.199999999999999" fill="none" stroke="#8a8a8a" stroke-width="1.1" stroke-linecap="round" stroke-linejoin="round"/></svg>
<svg style="left:799.8px;top:70.5px;" width="10" height="10" viewBox="0 0 10 10"><path d="M1 1.4H9L5 9Z" fill="none" stroke="#a06c47" stroke-width="1.3" stroke-linejoin="round"/></svg>
<svg style="left:846.7px;top:69.7px;" width="11" height="11" viewBox="0 0 11 11"><path d="M1.8 2H9.2L5.5 9Z" fill="none" stroke="#1a8f72" stroke-width=".9"/><circle cx="1.8" cy="2" r="1.2" fill="#282828" stroke="#1a8f72" stroke-width=".8"/><circle cx="9.2" cy="2" r="1.2" fill="#282828" stroke="#1a8f72" stroke-width=".8"/><circle cx="5.5" cy="9" r="1.2" fill="#282828" stroke="#1a8f72" stroke-width=".8"/></svg>
<span class="t" style="left:814.4px;top:70.40px;color:#8c8c8c;font-size:8px;">Cube</span>
<svg style="left:991.3px;top:73.4px;" width="10" height="7" viewBox="0 0 10 7"><path d="M.8 3C2.4 5.6 7.6 5.6 9.2 3" fill="none" stroke="#9a9a9a" stroke-width=".9" stroke-linecap="round"/></svg>
<svg style="left:1004.4px;top:71.0px;" width="10" height="9" viewBox="0 0 10 9"><path d="M3 1.8L3.8 .6H6.2L7 1.8H8.8a.7.7 0 0 1 .7.7V7.6a.7.7 0 0 1-.7.7H1.2a.7.7 0 0 1-.7-.7V2.5a.7.7 0 0 1 .7-.7Z" fill="#e6e6e6"/><circle cx="5" cy="5" r="2.2" fill="#282828"/><circle cx="5" cy="5" r="1.1" fill="#e6e6e6"/></svg>
<svg style="left:789.9px;top:85.9px;" width="3.4" height="5.6" viewBox="0 0 3.4 5.6"><path d="M.5 .4L2.8 2.8L.5 5.199999999999999" fill="none" stroke="#c8c8c8" stroke-width="1.1" stroke-linecap="round" stroke-linejoin="round"/></svg>
<svg style="left:799.8px;top:83.7px;" width="10" height="10" viewBox="0 0 10 10"><path d="M1 1.4H9L5 9Z" fill="none" stroke="#e8914a" stroke-width="1.3" stroke-linejoin="round"/></svg>
<svg style="left:846.7px;top:82.9px;" width="11" height="11" viewBox="0 0 11 11"><path d="M1.8 2H9.2L5.5 9Z" fill="none" stroke="#19b38a" stroke-width=".9"/><circle cx="1.8" cy="2" r="1.2" fill="#282828" stroke="#19b38a" stroke-width=".8"/><circle cx="9.2" cy="2" r="1.2" fill="#282828" stroke="#19b38a" stroke-width=".8"/><circle cx="5.5" cy="9" r="1.2" fill="#282828" stroke="#19b38a" stroke-width=".8"/></svg>
<span class="t" style="left:814.4px;top:83.60px;color:#e6e6e6;font-size:8px;">Cubo</span>
<svg style="left:991.3px;top:85.2px;" width="10" height="7" viewBox="0 0 10 7"><path d="M.5 3.5C2 1.2 3.6 .6 5 .6C6.4 .6 8 1.2 9.5 3.5C8 5.8 6.4 6.4 5 6.4C3.6 6.4 2 5.8 .5 3.5Z" fill="none" stroke="#e6e6e6" stroke-width=".9"/><circle cx="5" cy="3.5" r="1.6" fill="#e6e6e6"/></svg>
<svg style="left:1004.4px;top:84.2px;" width="10" height="9" viewBox="0 0 10 9"><path d="M3 1.8L3.8 .6H6.2L7 1.8H8.8a.7.7 0 0 1 .7.7V7.6a.7.7 0 0 1-.7.7H1.2a.7.7 0 0 1-.7-.7V2.5a.7.7 0 0 1 .7-.7Z" fill="#e6e6e6"/><circle cx="5" cy="5" r="2.2" fill="#282828"/><circle cx="5" cy="5" r="1.1" fill="#e6e6e6"/></svg>
<svg style="left:789.9px;top:99.10000000000001px;" width="3.4" height="5.6" viewBox="0 0 3.4 5.6"><path d="M.5 .4L2.8 2.8L.5 5.199999999999999" fill="none" stroke="#c8c8c8" stroke-width="1.1" stroke-linecap="round" stroke-linejoin="round"/></svg>
<svg style="left:799.8px;top:96.9px;" width="10" height="10" viewBox="0 0 10 10"><path d="M1 1.4H9L5 9Z" fill="none" stroke="#e8914a" stroke-width="1.3" stroke-linejoin="round"/></svg>
<svg style="left:863.5px;top:96.10000000000001px;" width="11" height="11" viewBox="0 0 11 11"><path d="M1.8 2H9.2L5.5 9Z" fill="none" stroke="#19b38a" stroke-width=".9"/><circle cx="1.8" cy="2" r="1.2" fill="#282828" stroke="#19b38a" stroke-width=".8"/><circle cx="9.2" cy="2" r="1.2" fill="#282828" stroke="#19b38a" stroke-width=".8"/><circle cx="5.5" cy="9" r="1.2" fill="#282828" stroke="#19b38a" stroke-width=".8"/></svg>
<span class="t" style="left:814.4px;top:96.80px;color:#e6e6e6;font-size:8px;">Cubo.001</span>
<svg style="left:991.3px;top:98.4px;" width="10" height="7" viewBox="0 0 10 7"><path d="M.5 3.5C2 1.2 3.6 .6 5 .6C6.4 .6 8 1.2 9.5 3.5C8 5.8 6.4 6.4 5 6.4C3.6 6.4 2 5.8 .5 3.5Z" fill="none" stroke="#e6e6e6" stroke-width=".9"/><circle cx="5" cy="3.5" r="1.6" fill="#e6e6e6"/></svg>
<svg style="left:1004.4px;top:97.4px;" width="10" height="9" viewBox="0 0 10 9"><path d="M3 1.8L3.8 .6H6.2L7 1.8H8.8a.7.7 0 0 1 .7.7V7.6a.7.7 0 0 1-.7.7H1.2a.7.7 0 0 1-.7-.7V2.5a.7.7 0 0 1 .7-.7Z" fill="#e6e6e6"/><circle cx="5" cy="5" r="2.2" fill="#282828"/><circle cx="5" cy="5" r="1.1" fill="#e6e6e6"/></svg>
<svg style="left:789.9px;top:112.3px;" width="3.4" height="5.6" viewBox="0 0 3.4 5.6"><path d="M.5 .4L2.8 2.8L.5 5.199999999999999" fill="none" stroke="#c8c8c8" stroke-width="1.1" stroke-linecap="round" stroke-linejoin="round"/></svg>
<svg style="left:799.8px;top:109.6px;" width="10" height="11" viewBox="0 0 10 11"><path d="M5 .6A3.7 3.7 0 0 1 7.2 7.2V8.4H2.8V7.2A3.7 3.7 0 0 1 5 .6Z" fill="#e8914a"/><path d="M3.2 9.2H6.8M3.8 10.3H6.2" stroke="#e8914a" stroke-width=".8"/><path d="M4 4L5 5.4L6 4" stroke="#282828" stroke-width=".7" fill="none"/></svg>
<svg style="left:846.1px;top:109.6px;" width="11" height="11" viewBox="0 0 11 11"><circle cx="5.5" cy="5" r="4.2" fill="none" stroke="#19b38a" stroke-width=".9"/><circle cx="5.5" cy="5" r="1.2" fill="#19b38a"/><path d="M5.5 6V10.6" stroke="#19b38a" stroke-width=".9"/></svg>
<span class="t" style="left:814.4px;top:110.00px;color:#e6e6e6;font-size:8px;">Light</span>
<svg style="left:991.3px;top:111.6px;" width="10" height="7" viewBox="0 0 10 7"><path d="M.5 3.5C2 1.2 3.6 .6 5 .6C6.4 .6 8 1.2 9.5 3.5C8 5.8 6.4 6.4 5 6.4C3.6 6.4 2 5.8 .5 3.5Z" fill="none" stroke="#e6e6e6" stroke-width=".9"/><circle cx="5" cy="3.5" r="1.6" fill="#e6e6e6"/></svg>
<svg style="left:1004.4px;top:110.6px;" width="10" height="9" viewBox="0 0 10 9"><path d="M3 1.8L3.8 .6H6.2L7 1.8H8.8a.7.7 0 0 1 .7.7V7.6a.7.7 0 0 1-.7.7H1.2a.7.7 0 0 1-.7-.7V2.5a.7.7 0 0 1 .7-.7Z" fill="#e6e6e6"/><circle cx="5" cy="5" r="2.2" fill="#282828"/><circle cx="5" cy="5" r="1.1" fill="#e6e6e6"/></svg>
<svg style="left:789.9px;top:125.50000000000001px;" width="3.4" height="5.6" viewBox="0 0 3.4 5.6"><path d="M.5 .4L2.8 2.8L.5 5.199999999999999" fill="none" stroke="#c8c8c8" stroke-width="1.1" stroke-linecap="round" stroke-linejoin="round"/></svg>
<div class="b" style="left:799.5px;top:122.30000000000001px;width:10.50px;height:12.00px;background:#5a6480;border-radius:2px;"></div>
<svg style="left:799.8px;top:123.30000000000001px;" width="10" height="10" viewBox="0 0 10 10"><path d="M1 1.4H9L5 9Z" fill="none" stroke="#e8914a" stroke-width="1.3" stroke-linejoin="round"/></svg>
<svg style="left:855.0px;top:122.5px;" width="11" height="11" viewBox="0 0 11 11"><path d="M1.8 2H9.2L5.5 9Z" fill="none" stroke="#19b38a" stroke-width=".9"/><circle cx="1.8" cy="2" r="1.2" fill="#282828" stroke="#19b38a" stroke-width=".8"/><circle cx="9.2" cy="2" r="1.2" fill="#282828" stroke="#19b38a" stroke-width=".8"/><circle cx="5.5" cy="9" r="1.2" fill="#282828" stroke="#19b38a" stroke-width=".8"/></svg>
<span class="t" style="left:814.4px;top:123.20px;color:#f0a04a;font-size:8px;">Toroide</span>
<svg style="left:991.3px;top:124.80000000000001px;" width="10" height="7" viewBox="0 0 10 7"><path d="M.5 3.5C2 1.2 3.6 .6 5 .6C6.4 .6 8 1.2 9.5 3.5C8 5.8 6.4 6.4 5 6.4C3.6 6.4 2 5.8 .5 3.5Z" fill="none" stroke="#e6e6e6" stroke-width=".9"/><circle cx="5" cy="3.5" r="1.6" fill="#e6e6e6"/></svg>
<svg style="left:1004.4px;top:123.80000000000001px;" width="10" height="9" viewBox="0 0 10 9"><path d="M3 1.8L3.8 .6H6.2L7 1.8H8.8a.7.7 0 0 1 .7.7V7.6a.7.7 0 0 1-.7.7H1.2a.7.7 0 0 1-.7-.7V2.5a.7.7 0 0 1 .7-.7Z" fill="#e6e6e6"/><circle cx="5" cy="5" r="2.2" fill="#282828"/><circle cx="5" cy="5" r="1.1" fill="#e6e6e6"/></svg>
<div class="b" style="left:757.9px;top:33px;width:264.80px;height:17.20px;background:#2e2e2e;border-radius:0px;"></div>
<div class="b" style="left:764px;top:35.3px;width:20.70px;height:12.10px;background:#282828;border-radius:3px;border:0.5px solid #3d3d3d;"></div>
<svg style="left:766.5px;top:36.5px;" width="10" height="10" viewBox="0 0 10 10"><rect x=".6" y=".8" width="3.6" height="2" rx=".5" fill="#e6e6e6"/><rect x="4.6" y="3.9" width="4.8" height="2" rx=".5" fill="#e6e6e6"/><rect x="4.6" y="7" width="4.8" height="2" rx=".5" fill="#e6e6e6"/><path d="M2.2 3V8H4.4M2.2 4.9H4.4" fill="none" stroke="#e6e6e6" stroke-width=".8"/></svg>
<svg style="left:778.3000000000001px;top:40.0px;" width="4.6" height="3.4" viewBox="0 0 4.6 3.4"><path d="M.4 .5L2.3 2.8L4.199999999999999 .5" fill="none" stroke="#c6c6c6" stroke-width="1.0" stroke-linecap="round" stroke-linejoin="round"/></svg>
<div class="b" style="left:788.4px;top:35.3px;width:21.30px;height:12.10px;background:#282828;border-radius:3px;border:0.5px solid #3d3d3d;"></div>
<svg style="left:791px;top:36.5px;" width="10" height="10" viewBox="0 0 10 10"><path d="M2.6 2.2V1.6a.6.6 0 0 1 .6-.6H8.6a.6.6 0 0 1 .6.6V6a.6.6 0 0 1-.6.6H8" fill="none" stroke="#bdbdbd" stroke-width=".9"/><rect x=".8" y="2.8" width="7" height="6" rx=".7" fill="#d8d8d8"/><path d="M1.8 8L4 4.6L5.4 6.6L6.2 5.8L7 8Z" fill="#2b2b2b"/></svg>
<svg style="left:803.1px;top:40.0px;" width="4.6" height="3.4" viewBox="0 0 4.6 3.4"><path d="M.4 .5L2.3 2.8L4.199999999999999 .5" fill="none" stroke="#c6c6c6" stroke-width="1.0" stroke-linecap="round" stroke-linejoin="round"/></svg>
<div class="b" style="left:844px;top:35.2px;width:78.50px;height:12.00px;background:#1d1d1d;border-radius:3px;border:0.5px solid #3a3a3a;"></div>
<svg style="left:847.0px;top:36.9px;" width="9" height="9" viewBox="0 0 9 9"><circle cx="3.6" cy="3.6" r="2.7" fill="none" stroke="#d0d0d0" stroke-width="1"/><path d="M5.6 5.6L8.3 8.3" stroke="#d0d0d0" stroke-width="1.2" stroke-linecap="round"/></svg>
<span class="t" style="left:860.5px;top:35.90px;color:#6e6e6e;font-size:8px;">Buscar</span>
<div class="b" style="left:980.4px;top:35.2px;width:20.00px;height:12.20px;background:#282828;border-radius:3px;border:0.5px solid #3d3d3d;"></div>
<svg style="left:981.6px;top:36.3px;" width="10" height="10" viewBox="0 0 10 10"><path d="M.6 .8H9.4L5.9 5V9.4L4.1 8.2V5Z" fill="none" stroke="#e6e6e6" stroke-width=".9" stroke-linejoin="round"/></svg>
<svg style="left:993.9000000000001px;top:40.199999999999996px;" width="4.6" height="3.4" viewBox="0 0 4.6 3.4"><path d="M.4 .5L2.3 2.8L4.199999999999999 .5" fill="none" stroke="#c6c6c6" stroke-width="1.0" stroke-linecap="round" stroke-linejoin="round"/></svg>
<div class="b" style="left:1004.6px;top:35.2px;width:13.40px;height:12.20px;background:#565656;border-radius:3px;"></div>
<svg style="left:1006.3px;top:36.3px;" width="10" height="10" viewBox="0 0 10 10"><rect x=".8" y="2" width="6.6" height="7" rx=".6" fill="none" stroke="#e6e6e6" stroke-width=".9"/><path d="M2.4 4.6H5.8M2.4 6.6H5.8" stroke="#e6e6e6" stroke-width=".7"/><circle cx="7.6" cy="2.4" r="2" fill="#e6e6e6"/><path d="M7.6 1.2V3.6M6.4 2.4H8.8" stroke="#565656" stroke-width=".7"/></svg>
<div class="b" style="left:1019.6px;top:71px;width:1.60px;height:42.00px;background:#5a5a5a;border-radius:1px;"></div>
</div></div>
<div class="area" style="left:757.9px;top:131.5px;width:264.8px;height:428.9px;background:#303030;">
<div style="position:absolute;left:-757.9px;top:-131.5px;width:1024px;height:576px;">
<div class="b" style="left:757.9px;top:149.5px;width:19.60px;height:410.50px;background:#1c1c1c;border-radius:0px;"></div>
<div class="b" style="left:757.9px;top:149.5px;width:19.60px;height:23.00px;background:#2a2a2a;border-radius:0px;"></div>
<div class="b" style="left:759.3px;top:412px;width:18.20px;height:17.30px;background:#303030;border-radius:3px 0 0 3pxpx;"></div>
<svg style="left:762.8px;top:157.8px;" width="11" height="11" viewBox="0 0 11 11"><path d="M2.2 1V4.2L3 5V10.4a.9.9 0 0 0 1.8 0V5L5.6 4.2V1H4.6V3.4H3.2V1Z" fill="#d0d0d0"/><path d="M8.6 1A2 2 0 0 0 7.6 4.6V10.4a.9.9 0 0 0 1.9 0V4.6A2 2 0 0 0 10.6 1V3H8.6Z" fill="#d0d0d0" transform="translate(-.6 0)"/></svg>
<svg style="left:762.8px;top:180.8px;" width="11" height="11" viewBox="0 0 11 11"><rect x=".8" y="3" width="9" height="6.6" rx=".8" fill="none" stroke="#d0d0d0" stroke-width="1"/><path d="M2.4 3L3.2 1.4H5.4L6.2 3" fill="none" stroke="#d0d0d0" stroke-width=".9"/><rect x="8.2" y="4.4" width="2.6" height="3.6" fill="#d0d0d0"/></svg>
<svg style="left:762.8px;top:199.5px;" width="11" height="11" viewBox="0 0 11 11"><path d="M1 1.6H10V5.4H1Z" fill="#d0d0d0"/><path d="M2.6 5.4V10H8.4V5.4" fill="none" stroke="#d0d0d0" stroke-width=".9"/><path d="M3.6 9L5 7L6 8.2L6.6 7.6L7.6 9Z" fill="#d0d0d0"/></svg>
<svg style="left:762.8px;top:218.2px;" width="11" height="11" viewBox="0 0 11 11"><path d="M2.8 2.4V1.4H10V8H9" fill="none" stroke="#d0d0d0" stroke-width=".9"/><rect x="1" y="3" width="7.4" height="6.8" rx=".6" fill="#d0d0d0"/><path d="M2 9L4.2 5.6L5.8 7.8L6.6 7L7.6 9Z" fill="#1d1d1d"/></svg>
<svg style="left:762.8px;top:237.0px;" width="11" height="11" viewBox="0 0 11 11"><path d="M1 9.6L3.6 1.6L5.6 6L6.4 5L7 6.4" fill="#d0d0d0" stroke="#d0d0d0" stroke-width=".5" stroke-linejoin="round"/><path d="M1 9.6H5L5.4 6Z" fill="#d0d0d0"/><circle cx="7.8" cy="8" r="2.1" fill="none" stroke="#d0d0d0" stroke-width=".9"/><circle cx="8.6" cy="2.8" r="1.2" fill="#d0d0d0"/></svg>
<svg style="left:762.8px;top:256.2px;" width="11" height="11" viewBox="0 0 11 11"><circle cx="5.5" cy="5.5" r="4.4" fill="none" stroke="#e05a5a" stroke-width="1"/><path d="M2.4 2.8C4 3.4 3.6 5 5 5.4C6.4 5.8 5.6 7.6 4.6 9.6M7 1.6C6.4 3 8.4 3.6 9.6 4.6M7.6 9.4C7.4 8 8.8 7.6 9.8 6.8" fill="none" stroke="#e05a5a" stroke-width=".9"/></svg>
<svg style="left:762.8px;top:278.0px;" width="11" height="11" viewBox="0 0 11 11"><rect x="1" y="1.4" width="9" height="2.6" rx=".5" fill="none" stroke="#d0d0d0" stroke-width=".9"/><path d="M1.8 4V9.8H9.2V4" fill="none" stroke="#d0d0d0" stroke-width=".9"/><path d="M4 6.2H7" stroke="#d0d0d0" stroke-width="1"/></svg>
<svg style="left:762.8px;top:302.5px;" width="11" height="11" viewBox="0 0 11 11"><rect x="2.8" y="2.8" width="5.4" height="5.4" fill="#e8914a"/><path d="M.8 3V1.8a1 1 0 0 1 1-1H3M8 .8H9.2a1 1 0 0 1 1 1V3M10.2 8V9.2a1 1 0 0 1-1 1H8M3 10.2H1.8a1 1 0 0 1-1-1V8" fill="none" stroke="#e8914a" stroke-width=".9"/></svg>
<svg style="left:762.8px;top:321.9px;" width="11" height="11" viewBox="0 0 11 11"><path d="M7.4 .8A2.8 2.8 0 0 0 5 4.8L1.2 8.6A1.1 1.1 0 0 0 2.8 10.2L6.6 6.4A2.8 2.8 0 0 0 10.4 3.6L8.6 5.2L7 4.6L6.4 3L8.2 1.2A2.8 2.8 0 0 0 7.4 .8Z" fill="#5b8fe0"/></svg>
<svg style="left:762.8px;top:340.5px;" width="11" height="11" viewBox="0 0 11 11"><path d="M2.4 2.4L9.6 3.2M2.4 2.4L8.6 9.4M2.4 2.4L3 9.8" stroke="#4a7fd4" stroke-width=".8" fill="none"/><circle cx="2.4" cy="2.4" r="1.5" fill="#5b8fe0"/><circle cx="9.6" cy="3.2" r=".9" fill="#5b8fe0"/><circle cx="8.6" cy="9.4" r=".9" fill="#5b8fe0"/><circle cx="3" cy="9.8" r=".9" fill="#5b8fe0"/></svg>
<svg style="left:762.8px;top:358.7px;" width="11" height="11" viewBox="0 0 11 11"><circle cx="5" cy="6" r="3.8" fill="none" stroke="#5b8fe0" stroke-width="1"/><circle cx="5" cy="6" r="1.5" fill="#5b8fe0"/><circle cx="9.2" cy="2.2" r="1.2" fill="#5b8fe0"/><path d="M7.6 1.4A5.4 5.4 0 0 1 10.2 5" fill="none" stroke="#5b8fe0" stroke-width=".8"/></svg>
<svg style="left:762.8px;top:377.8px;" width="11" height="11" viewBox="0 0 11 11"><ellipse cx="4" cy="7" rx="3" ry="2.6" fill="none" stroke="#5b8fe0" stroke-width="1.2"/><ellipse cx="7" cy="4" rx="3" ry="2.6" fill="none" stroke="#5b8fe0" stroke-width="1.2"/><circle cx="4" cy="7" r=".9" fill="#5b8fe0"/></svg>
<svg style="left:762.8px;top:395.7px;" width="11" height="11" viewBox="0 0 11 11"><path d="M2 2.2H9L5.5 9.2Z" fill="none" stroke="#19b38a" stroke-width="1.1"/><circle cx="2" cy="2.2" r="1.3" fill="#1d1d1d" stroke="#19b38a" stroke-width=".9"/><circle cx="9" cy="2.2" r="1.3" fill="#1d1d1d" stroke="#19b38a" stroke-width=".9"/><circle cx="5.5" cy="9.2" r="1.3" fill="#1d1d1d" stroke="#19b38a" stroke-width=".9"/></svg>
<svg style="left:762.8px;top:415.2px;" width="11" height="11" viewBox="0 0 11 11"><circle cx="5.5" cy="5.5" r="4.5" fill="#e0606a"/><path d="M5.5 5.5L5.5 1A4.5 4.5 0 0 0 1.6 3.2ZM5.5 5.5L9.4 7.8A4.5 4.5 0 0 1 5.5 10Z" fill="#303030"/></svg>
<svg style="left:766.0px;top:440.2px;" width="4.6" height="3.4" viewBox="0 0 4.6 3.4"><path d="M.4 .5L2.3 2.8L4.199999999999999 .5" fill="none" stroke="#5a5a5a" stroke-width="1.0" stroke-linecap="round" stroke-linejoin="round"/></svg>
<div class="b" style="left:764.6px;top:133.8px;width:20.40px;height:11.60px;background:#282828;border-radius:3px;border:0.5px solid #3d3d3d;"></div>
<svg style="left:766.6px;top:135px;" width="10" height="10" viewBox="0 0 10 10"><rect x=".6" y="1" width="8" height="3.2" rx="1.4" fill="#e6e6e6"/><rect x=".6" y="5.8" width="8" height="3.2" rx="1.4" fill="#e6e6e6"/><circle cx="6.8" cy="2.6" r="1" fill="#282828"/><circle cx="2.4" cy="7.4" r="1" fill="#282828"/></svg>
<svg style="left:778.3000000000001px;top:138.6px;" width="4.6" height="3.4" viewBox="0 0 4.6 3.4"><path d="M.4 .5L2.3 2.8L4.199999999999999 .5" fill="none" stroke="#c6c6c6" stroke-width="1.0" stroke-linecap="round" stroke-linejoin="round"/></svg>
<div class="b" style="left:853px;top:133.6px;width:76.50px;height:11.80px;background:#1d1d1d;border-radius:3px;border:0.5px solid #3a3a3a;"></div>
<svg style="left:855.5px;top:135.1px;" width="9" height="9" viewBox="0 0 9 9"><circle cx="3.6" cy="3.6" r="2.7" fill="none" stroke="#d0d0d0" stroke-width="1"/><path d="M5.6 5.6L8.3 8.3" stroke="#d0d0d0" stroke-width="1.2" stroke-linecap="round"/></svg>
<span class="t" style="left:869px;top:134.10px;color:#6e6e6e;font-size:8px;">Buscar</span>
<div class="b" style="left:1004.6px;top:133.6px;width:13.40px;height:11.80px;background:#282828;border-radius:3px;border:0.5px solid #3d3d3d;"></div>
<svg style="left:1009.0px;top:138.4px;" width="4.6" height="3.4" viewBox="0 0 4.6 3.4"><path d="M.4 .5L2.3 2.8L4.199999999999999 .5" fill="none" stroke="#c6c6c6" stroke-width="1.0" stroke-linecap="round" stroke-linejoin="round"/></svg>
<svg style="left:783.8px;top:154.8px;" width="10" height="10" viewBox="0 0 10 10"><rect x="2.8" y="2.8" width="4.4" height="4.4" fill="#e6e6e6"/><path d="M.6 2.6V1.6a1 1 0 0 1 1-1H2.6M7.4 .6H8.4a1 1 0 0 1 1 1V2.6M9.4 7.4V8.4a1 1 0 0 1-1 1H7.4M2.6 9.4H1.6a1 1 0 0 1-1-1V7.4" fill="none" stroke="#e6e6e6" stroke-width=".9"/></svg>
<span class="t" style="left:799.8px;top:154.30px;color:#e6e6e6;font-size:8px;">Toroide</span>
<svg style="left:837.1999999999999px;top:157.0px;" width="3.4" height="5.6" viewBox="0 0 3.4 5.6"><path d="M.5 .4L2.8 2.8L.5 5.199999999999999" fill="none" stroke="#bdbdbd" stroke-width="1.1" stroke-linecap="round" stroke-linejoin="round"/></svg>
<svg style="left:846px;top:154.3px;" width="11" height="11" viewBox="0 0 11 11"><path d="M1.8 2H9.2L5.5 9Z" fill="none" stroke="#e6e6e6" stroke-width=".9"/><circle cx="1.8" cy="2" r="1.2" fill="#303030" stroke="#e6e6e6" stroke-width=".8"/><circle cx="9.2" cy="2" r="1.2" fill="#303030" stroke="#e6e6e6" stroke-width=".8"/><circle cx="5.5" cy="9" r="1.2" fill="#303030" stroke="#e6e6e6" stroke-width=".8"/></svg>
<span class="t" style="left:862.5px;top:154.30px;color:#e6e6e6;font-size:8px;">Toroide</span>
<svg style="left:899.9px;top:157.0px;" width="3.4" height="5.6" viewBox="0 0 3.4 5.6"><path d="M.5 .4L2.8 2.8L.5 5.199999999999999" fill="none" stroke="#bdbdbd" stroke-width="1.1" stroke-linecap="round" stroke-linejoin="round"/></svg>
<svg style="left:909.5px;top:154.8px;" width="10" height="10" viewBox="0 0 10 10"><circle cx="5" cy="5" r="4.3" fill="#e6e6e6"/><path d="M5 5V.7A4.3 4.3 0 0 0 1.3 2.8ZM5 5L8.7 7.2A4.3 4.3 0 0 1 5 9.3Z" fill="#303030"/><circle cx="5" cy="5" r="4.3" fill="none" stroke="#e6e6e6" stroke-width=".7"/></svg>
<span class="t" style="left:925.4px;top:154.30px;color:#e6e6e6;font-size:8px;">Material.004</span>
<svg style="left:1005.5px;top:155.20000000000002px;" width="10" height="10" viewBox="0 0 10 10"><g transform="rotate(45 5 5)"><path d="M3.2 .8H6.8V1.8L6.2 2.3V4.6L7.8 6V6.8H2.2V6L3.8 4.6V2.3L3.2 1.8Z" fill="none" stroke="#8a8a8a" stroke-width=".8" stroke-linejoin="round"/><path d="M5 6.8V9.8" stroke="#8a8a8a" stroke-width=".9"/></g></svg>
<div class="b" style="left:783px;top:178.1px;width:215.00px;height:51.70px;background:#262626;border-radius:3px;border:0.5px solid #3a3a3a;"></div>
<div class="b" style="left:786px;top:181px;width:209.00px;height:12.60px;background:#4772b3;border-radius:2px;"></div>
<svg style="left:791.5px;top:183px;" width="9" height="9" viewBox="0 0 9 9"><defs><radialGradient id="sph" cx=".4" cy=".35" r=".7"><stop offset="0" stop-color="#efe6da"/><stop offset=".6" stop-color="#bfb5a8"/><stop offset="1" stop-color="#5a544c"/></radialGradient></defs><circle cx="4.5" cy="4.5" r="4.2" fill="url(#sph)"/></svg>
<span class="t" style="left:805.8px;top:181.70px;color:#ffffff;font-size:8px;">Material.004</span>
<svg style="left:790.2px;top:221.6px;" width="4" height="4.4" viewBox="0 0 4 4.4"><path d="M.3 .3L3.6 2.2L.3 4.1Z" fill="#c8c8c8"/></svg>
<svg style="left:894.0px;top:222.3px;" width="7" height="3" viewBox="0 0 7 3"><rect x="0.0" y="0.0" width="1" height="1" fill="#5c5c5c"/><rect x="0.0" y="1.9" width="1" height="1" fill="#5c5c5c"/><rect x="1.9" y="0.0" width="1" height="1" fill="#5c5c5c"/><rect x="1.9" y="1.9" width="1" height="1" fill="#5c5c5c"/><rect x="3.8" y="0.0" width="1" height="1" fill="#5c5c5c"/><rect x="3.8" y="1.9" width="1" height="1" fill="#5c5c5c"/><rect x="5.699999999999999" y="0.0" width="1" height="1" fill="#5c5c5c"/><rect x="5.699999999999999" y="1.9" width="1" height="1" fill="#5c5c5c"/></svg>
<div class="b" style="left:1004.6px;top:178.6px;width:12.60px;height:12.40px;background:#565656;border-radius:3px 3px 0 0px;"></div>
<div class="b" style="left:1004.6px;top:191.4px;width:12.60px;height:12.20px;background:#565656;border-radius:0 0 3px 3pxpx;"></div>
<svg style="left:1007.4px;top:181.4px;" width="7" height="7" viewBox="0 0 7 7"><path d="M3.5 .4V6.6M.4 3.5H6.6" stroke="#e6e6e6" stroke-width="1"/></svg>
<svg style="left:1007.4px;top:194px;" width="7" height="7" viewBox="0 0 7 7"><path d="M.6 3.5H6.4" stroke="#e6e6e6" stroke-width="1"/></svg>
<div class="b" style="left:1004.6px;top:208.6px;width:12.60px;height:11.80px;background:#282828;border-radius:3px;border:0.5px solid #3d3d3d;"></div>
<svg style="left:1008.6px;top:213.20000000000002px;" width="4.6" height="3.4" viewBox="0 0 4.6 3.4"><path d="M.4 .5L2.3 2.8L4.199999999999999 .5" fill="none" stroke="#c6c6c6" stroke-width="1.0" stroke-linecap="round" stroke-linejoin="round"/></svg>
<div class="b" style="left:783.4px;top:234px;width:19.60px;height:12.00px;background:#282828;border-radius:3px 0 0 3pxpx;border:0.5px solid #3d3d3d;"></div>
<svg style="left:785.3px;top:235px;" width="10" height="10" viewBox="0 0 10 10"><circle cx="5" cy="5" r="4.3" fill="#e6e6e6"/><path d="M5 5V.7A4.3 4.3 0 0 0 1.3 2.8ZM5 5L8.7 7.2A4.3 4.3 0 0 1 5 9.3Z" fill="#282828"/><circle cx="5" cy="5" r="4.3" fill="none" stroke="#e6e6e6" stroke-width=".7"/></svg>
<svg style="left:796.5px;top:238.70000000000002px;" width="4.6" height="3.4" viewBox="0 0 4.6 3.4"><path d="M.4 .5L2.3 2.8L4.199999999999999 .5" fill="none" stroke="#c6c6c6" stroke-width="1.0" stroke-linecap="round" stroke-linejoin="round"/></svg>
<div class="b" style="left:803.4px;top:234px;width:146.60px;height:12.00px;background:#1d1d1d;border-radius:0px;"></div>
<span class="t" style="left:808.4px;top:234.50px;color:#e6e6e6;font-size:8px;">Material.004</span>
<div class="b" style="left:950.2px;top:234px;width:13.10px;height:12.00px;background:#474747;border-radius:0px;"></div>
<div class="b" style="left:963.7px;top:234px;width:13.10px;height:12.00px;background:#474747;border-radius:0px;"></div>
<div class="b" style="left:977.2px;top:234px;width:13.10px;height:12.00px;background:#474747;border-radius:0 3px 3px 0px;"></div>
<svg style="left:952.3px;top:235px;" width="9" height="10" viewBox="0 0 9 10"><path d="M4.5 .8 C3.2 1.8 2 2.1 .8 2.2 V5 C.8 7.2 2.6 8.6 4.5 9.3 C6.4 8.6 8.2 7.2 8.2 5 V2.2 C7 2.1 5.8 1.8 4.5 .8Z" fill="none" stroke="#b0b0b0" stroke-width=".9"/></svg>
<svg style="left:965.3px;top:235px;" width="10" height="10" viewBox="0 0 10 10"><path d="M3.3 3.1V.9H6.8L9.1 3.2V7.3H6.5" fill="none" stroke="#e0e0e0" stroke-width=".9" stroke-linejoin="miter"/><path d="M6.7 .7L9.3 3.3H6.7Z" fill="#e0e0e0"/><rect x=".9" y="3.1" width="5.6" height="6" fill="none" stroke="#e0e0e0" stroke-width=".9"/></svg>
<svg style="left:979.8px;top:236px;" width="8" height="8" viewBox="0 0 8 8"><path d="M1.6 1.6L6.4 6.4M6.4 1.6L1.6 6.4" stroke="#e0e0e0" stroke-width="0.85"/></svg>
<div class="b" style="left:996.8px;top:234px;width:20.40px;height:12.00px;background:#282828;border-radius:3px;border:0.5px solid #3d3d3d;"></div>
<svg style="left:998.6px;top:234.6px;" width="11" height="11" viewBox="0 0 11 11"><path d="M1.8 2H9.2L5.5 9Z" fill="none" stroke="#e6e6e6" stroke-width=".9"/><circle cx="1.8" cy="2" r="1.2" fill="#282828" stroke="#e6e6e6" stroke-width=".8"/><circle cx="9.2" cy="2" r="1.2" fill="#282828" stroke="#e6e6e6" stroke-width=".8"/><circle cx="5.5" cy="9" r="1.2" fill="#282828" stroke="#e6e6e6" stroke-width=".8"/></svg>
<svg style="left:1010.7px;top:238.70000000000002px;" width="4.6" height="3.4" viewBox="0 0 4.6 3.4"><path d="M.4 .5L2.3 2.8L4.199999999999999 .5" fill="none" stroke="#c6c6c6" stroke-width="1.0" stroke-linecap="round" stroke-linejoin="round"/></svg>
<div class="b" style="left:782px;top:253.2px;width:235.80px;height:16.40px;background:#3a3a3a;border-radius:3px;"></div><svg style="left:789.4px;top:258.59999999999997px;" width="3.4" height="5.6" viewBox="0 0 3.4 5.6"><path d="M.5 .4L2.8 2.8L.5 5.199999999999999" fill="none" stroke="#c8c8c8" stroke-width="1.1" stroke-linecap="round" stroke-linejoin="round"/></svg><span class="t" style="left:796.6px;top:255.90px;color:#e6e6e6;font-size:8px;">Previsualización</span><svg style="left:1004.1px;top:260.09999999999997px;" width="7" height="3" viewBox="0 0 7 3"><rect x="0.0" y="0.0" width="1" height="1" fill="#555"/><rect x="0.0" y="1.9" width="1" height="1" fill="#555"/><rect x="1.9" y="0.0" width="1" height="1" fill="#555"/><rect x="1.9" y="1.9" width="1" height="1" fill="#555"/><rect x="3.8" y="0.0" width="1" height="1" fill="#555"/><rect x="3.8" y="1.9" width="1" height="1" fill="#555"/><rect x="5.699999999999999" y="0.0" width="1" height="1" fill="#555"/><rect x="5.699999999999999" y="1.9" width="1" height="1" fill="#555"/></svg>
<div class="b" style="left:782px;top:271.6px;width:235.80px;height:228.30px;background:#3a3a3a;border-radius:3px;"></div>
<svg style="left:788.7px;top:278.09999999999997px;" width="4.6" height="3.4" viewBox="0 0 4.6 3.4"><path d="M.4 .5L2.3 2.8L4.199999999999999 .5" fill="none" stroke="#c8c8c8" stroke-width="1.0" stroke-linecap="round" stroke-linejoin="round"/></svg>
<span class="t" style="left:796.6px;top:273.90px;color:#e6e6e6;font-size:8px;">Superficie</span>
<svg style="left:1004.1px;top:278.1px;" width="7" height="3" viewBox="0 0 7 3"><rect x="0.0" y="0.0" width="1" height="1" fill="#555"/><rect x="0.0" y="1.9" width="1" height="1" fill="#555"/><rect x="1.9" y="0.0" width="1" height="1" fill="#555"/><rect x="1.9" y="1.9" width="1" height="1" fill="#555"/><rect x="3.8" y="0.0" width="1" height="1" fill="#555"/><rect x="3.8" y="1.9" width="1" height="1" fill="#555"/><rect x="5.699999999999999" y="0.0" width="1" height="1" fill="#555"/><rect x="5.699999999999999" y="1.9" width="1" height="1" fill="#555"/></svg>
<span class="t" style="right:154.79999999999995px;top:293.90px;color:#e6e6e6;font-size:8px;">Superficie</span>
<div class="b" style="left:876px;top:293.6px;width:122.00px;height:11.80px;background:#282828;border-radius:3px;"></div>
<svg style="left:879.7px;top:297.0px;" width="5.0" height="5.0" viewBox="0 0 5.0 5.0"><circle cx="2.5" cy="2.5" r="2.5" fill="#63c763"/></svg>
<span class="t" style="left:889.6px;top:293.90px;color:#e6e6e6;font-size:8px;">BSDF Difuso</span>
<svg style="left:791.7px;top:321.29999999999995px;" width="4.6" height="3.4" viewBox="0 0 4.6 3.4"><path d="M.4 .5L2.3 2.8L4.199999999999999 .5" fill="none" stroke="#c8c8c8" stroke-width="1.0" stroke-linecap="round" stroke-linejoin="round"/></svg>
<svg style="left:806.25px;top:321.54999999999995px;" width="2.7" height="2.7" viewBox="0 0 2.7 2.7"><circle cx="1.35" cy="1.35" r="1.35" fill="#e6e6e6"/></svg>
<span class="t" style="right:154.79999999999995px;top:317.30px;color:#e6e6e6;font-size:8px;">Color</span>
<div class="b" style="left:876px;top:317px;width:122.00px;height:11.80px;background:#35435f;border-radius:3px;"></div>
<svg style="left:879.7px;top:320.4px;" width="5.0" height="5.0" viewBox="0 0 5.0 5.0"><circle cx="2.5" cy="2.5" r="2.5" fill="#c7c729"/></svg>
<span class="t" style="left:889.6px;top:317.30px;color:#e6e6e6;font-size:8px;letter-spacing:.06px;">pngtree-brea...e_12920042.</span>
<div class="b" style="left:788.7px;top:333.5px;width:19.30px;height:11.90px;background:#282828;border-radius:3px 0 0 3pxpx;border:0.5px solid #444;"></div>
<svg style="left:790.4px;top:334.5px;" width="10" height="10" viewBox="0 0 10 10"><rect x=".6" y=".8" width="8.8" height="8.4" rx="1" fill="none" stroke="#e6e6e6" stroke-width=".9"/><path d="M1 8.8L4 4.2L6.2 7.4L7.2 6.2L9 8.8Z" fill="#e6e6e6"/><circle cx="7" cy="3" r=".9" fill="#e6e6e6"/></svg>
<svg style="left:801.5px;top:338.2px;" width="4.6" height="3.4" viewBox="0 0 4.6 3.4"><path d="M.4 .5L2.3 2.8L4.199999999999999 .5" fill="none" stroke="#c6c6c6" stroke-width="1.0" stroke-linecap="round" stroke-linejoin="round"/></svg>
<div class="b" style="left:808.4px;top:333.5px;width:149.60px;height:11.90px;background:#1d1d1d;border-radius:0px;"></div>
<span class="t" style="left:813.6px;top:333.90px;color:#e6e6e6;font-size:8px;letter-spacing:.12px;">pngtree-bread-tex...age_12920042.jpg</span>
<div class="b" style="left:958.2px;top:333.5px;width:13.00px;height:11.90px;background:#545454;border-radius:0px;"></div>
<div class="b" style="left:971.6px;top:333.5px;width:13.00px;height:11.90px;background:#545454;border-radius:0px;"></div>
<div class="b" style="left:985px;top:333.5px;width:13.00px;height:11.90px;background:#545454;border-radius:0px;"></div>
<div class="b" style="left:998.4px;top:333.5px;width:13.00px;height:11.90px;background:#545454;border-radius:0 3px 3px 0px;"></div>
<svg style="left:960.2px;top:334.5px;" width="9" height="10" viewBox="0 0 9 10"><path d="M4.5 .8 C3.2 1.8 2 2.1 .8 2.2 V5 C.8 7.2 2.6 8.6 4.5 9.3 C6.4 8.6 8.2 7.2 8.2 5 V2.2 C7 2.1 5.8 1.8 4.5 .8Z" fill="none" stroke="#b8b8b8" stroke-width=".9"/></svg>
<svg style="left:973.2px;top:334.5px;" width="10" height="10" viewBox="0 0 10 10"><path d="M3.3 3.1V.9H6.8L9.1 3.2V7.3H6.5" fill="none" stroke="#e0e0e0" stroke-width=".9" stroke-linejoin="miter"/><path d="M6.7 .7L9.3 3.3H6.7Z" fill="#e0e0e0"/><rect x=".9" y="3.1" width="5.6" height="6" fill="none" stroke="#e0e0e0" stroke-width=".9"/></svg>
<svg style="left:986.5px;top:335.0px;" width="10" height="9" viewBox="0 0 10 9"><path d="M.6 1.6a.6.6 0 0 1 .6-.6H3.6L4.6 2.2H8.8a.6.6 0 0 1 .6.6V3.4H.6Z" fill="#e0e0e0"/><rect x=".6" y="4" width="8.8" height="4.6" rx=".6" fill="#e0e0e0"/></svg>
<svg style="left:1001px;top:335.5px;" width="8" height="8" viewBox="0 0 8 8"><path d="M1.6 1.6L6.4 6.4M6.4 1.6L1.6 6.4" stroke="#e0e0e0" stroke-width="0.85"/></svg>
<div class="b" style="left:876px;top:350.3px;width:122.00px;height:11.80px;background:#282828;border-radius:3px;"></div>
<span class="t" style="left:881px;top:350.60px;color:#e6e6e6;font-size:8px;">Lineal</span>
<svg style="left:991.9000000000001px;top:354.9px;" width="4.6" height="3.4" viewBox="0 0 4.6 3.4"><path d="M.4 .5L2.3 2.8L4.199999999999999 .5" fill="none" stroke="#c6c6c6" stroke-width="1.0" stroke-linecap="round" stroke-linejoin="round"/></svg>
<svg style="left:1004.15px;top:354.95px;" width="2.7" height="2.7" viewBox="0 0 2.7 2.7"><circle cx="1.35" cy="1.35" r="1.35" fill="#e6e6e6"/></svg>
<div class="b" style="left:876px;top:366.8px;width:122.00px;height:11.80px;background:#282828;border-radius:3px;"></div>
<span class="t" style="left:881px;top:367.10px;color:#e6e6e6;font-size:8px;">Plano</span>
<svg style="left:991.9000000000001px;top:371.4px;" width="4.6" height="3.4" viewBox="0 0 4.6 3.4"><path d="M.4 .5L2.3 2.8L4.199999999999999 .5" fill="none" stroke="#c6c6c6" stroke-width="1.0" stroke-linecap="round" stroke-linejoin="round"/></svg>
<svg style="left:1004.15px;top:371.45px;" width="2.7" height="2.7" viewBox="0 0 2.7 2.7"><circle cx="1.35" cy="1.35" r="1.35" fill="#e6e6e6"/></svg>
<div class="b" style="left:876px;top:383.2px;width:122.00px;height:11.80px;background:#282828;border-radius:3px;"></div>
<span class="t" style="left:881px;top:383.50px;color:#e6e6e6;font-size:8px;">Repetir</span>
<svg style="left:991.9000000000001px;top:387.79999999999995px;" width="4.6" height="3.4" viewBox="0 0 4.6 3.4"><path d="M.4 .5L2.3 2.8L4.199999999999999 .5" fill="none" stroke="#c6c6c6" stroke-width="1.0" stroke-linecap="round" stroke-linejoin="round"/></svg>
<svg style="left:1004.15px;top:387.84999999999997px;" width="2.7" height="2.7" viewBox="0 0 2.7 2.7"><circle cx="1.35" cy="1.35" r="1.35" fill="#e6e6e6"/></svg>
<div class="b" style="left:876px;top:399.7px;width:122.00px;height:11.80px;background:#282828;border-radius:3px;"></div>
<span class="t" style="left:881px;top:400.00px;color:#e6e6e6;font-size:8px;">Imagen fija</span>
<svg style="left:991.9000000000001px;top:404.29999999999995px;" width="4.6" height="3.4" viewBox="0 0 4.6 3.4"><path d="M.4 .5L2.3 2.8L4.199999999999999 .5" fill="none" stroke="#c6c6c6" stroke-width="1.0" stroke-linecap="round" stroke-linejoin="round"/></svg>
<span class="t" style="left:788.3px;top:416.20px;color:#e6e6e6;font-size:8px;">Espacio de color</span>
<div class="b" style="left:922.2px;top:416px;width:75.80px;height:11.80px;background:#282828;border-radius:3px;"></div>
<span class="t" style="left:927px;top:416.20px;color:#e6e6e6;font-size:8px;">sRGB</span>
<svg style="left:991.9000000000001px;top:420.59999999999997px;" width="4.6" height="3.4" viewBox="0 0 4.6 3.4"><path d="M.4 .5L2.3 2.8L4.199999999999999 .5" fill="none" stroke="#c6c6c6" stroke-width="1.0" stroke-linecap="round" stroke-linejoin="round"/></svg>
<span class="t" style="left:788.3px;top:432.70px;color:#e6e6e6;font-size:8px;">Alfa</span>
<div class="b" style="left:922.2px;top:432.6px;width:75.80px;height:11.80px;background:#282828;border-radius:3px;"></div>
<span class="t" style="left:927px;top:432.80px;color:#e6e6e6;font-size:8px;">Directo</span>
<svg style="left:991.9000000000001px;top:437.2px;" width="4.6" height="3.4" viewBox="0 0 4.6 3.4"><path d="M.4 .5L2.3 2.8L4.199999999999999 .5" fill="none" stroke="#c6c6c6" stroke-width="1.0" stroke-linecap="round" stroke-linejoin="round"/></svg>
<span class="t" style="right:154.79999999999995px;top:449.40px;color:#e6e6e6;font-size:8px;">Vector</span>
<div class="b" style="left:876px;top:449px;width:122.00px;height:11.80px;background:#282828;border-radius:3px;"></div>
<svg style="left:879.7px;top:452.5px;" width="5.0" height="5.0" viewBox="0 0 5.0 5.0"><circle cx="2.5" cy="2.5" r="2.5" fill="#6a63d8"/></svg>
<span class="t" style="left:889.6px;top:449.40px;color:#e6e6e6;font-size:8px;">Predefinido</span>
<span class="t" style="right:154.79999999999995px;top:466.00px;color:#e6e6e6;font-size:8px;">Rugosidad</span>
<div class="b" style="left:876px;top:465.6px;width:122.00px;height:11.80px;background:#282828;border-radius:3px;"></div>
<svg style="left:879.7px;top:469.1px;" width="5.0" height="5.0" viewBox="0 0 5.0 5.0"><circle cx="2.5" cy="2.5" r="2.5" fill="#a8a8a8"/></svg>
<div class="b" style="left:888.2px;top:465.6px;width:109.80px;height:11.80px;background:#545454;border-radius:0 3px 3px 0px;"></div>
<div class="b" style="left:888.2px;top:465.6px;width:55.00px;height:11.80px;background:#4772b3;border-radius:0px;"></div>
<span class="t" style="left:931.5px;top:466.00px;color:#ffffff;font-size:8px;">0.500</span>
<svg style="left:1004.15px;top:470.45px;" width="2.7" height="2.7" viewBox="0 0 2.7 2.7"><circle cx="1.35" cy="1.35" r="1.35" fill="#e6e6e6"/></svg>
<span class="t" style="right:154.79999999999995px;top:482.40px;color:#e6e6e6;font-size:8px;">Normal</span>
<div class="b" style="left:876px;top:482.2px;width:122.00px;height:11.80px;background:#282828;border-radius:3px;"></div>
<svg style="left:879.7px;top:485.6px;" width="5.0" height="5.0" viewBox="0 0 5.0 5.0"><circle cx="2.5" cy="2.5" r="2.5" fill="#6a63d8"/></svg>
<span class="t" style="left:889.6px;top:482.40px;color:#e6e6e6;font-size:8px;">Predefinido</span>
<div class="b" style="left:782px;top:501.8px;width:235.80px;height:16.10px;background:#3a3a3a;border-radius:3px;"></div><svg style="left:789.4px;top:507.05px;" width="3.4" height="5.6" viewBox="0 0 3.4 5.6"><path d="M.5 .4L2.8 2.8L.5 5.199999999999999" fill="none" stroke="#c8c8c8" stroke-width="1.1" stroke-linecap="round" stroke-linejoin="round"/></svg><span class="t" style="left:796.6px;top:504.35px;color:#e6e6e6;font-size:8px;">Volumen</span><svg style="left:1004.1px;top:508.55px;" width="7" height="3" viewBox="0 0 7 3"><rect x="0.0" y="0.0" width="1" height="1" fill="#555"/><rect x="0.0" y="1.9" width="1" height="1" fill="#555"/><rect x="1.9" y="0.0" width="1" height="1" fill="#555"/><rect x="1.9" y="1.9" width="1" height="1" fill="#555"/><rect x="3.8" y="0.0" width="1" height="1" fill="#555"/><rect x="3.8" y="1.9" width="1" height="1" fill="#555"/><rect x="5.699999999999999" y="0.0" width="1" height="1" fill="#555"/><rect x="5.699999999999999" y="1.9" width="1" height="1" fill="#555"/></svg>
<div class="b" style="left:782px;top:519.5px;width:235.80px;height:15.80px;background:#3a3a3a;border-radius:3px;"></div><svg style="left:789.4px;top:524.6px;" width="3.4" height="5.6" viewBox="0 0 3.4 5.6"><path d="M.5 .4L2.8 2.8L.5 5.199999999999999" fill="none" stroke="#c8c8c8" stroke-width="1.1" stroke-linecap="round" stroke-linejoin="round"/></svg><span class="t" style="left:796.6px;top:521.90px;color:#e6e6e6;font-size:8px;">Desplazamiento</span><svg style="left:1004.1px;top:526.1px;" width="7" height="3" viewBox="0 0 7 3"><rect x="0.0" y="0.0" width="1" height="1" fill="#555"/><rect x="0.0" y="1.9" width="1" height="1" fill="#555"/><rect x="1.9" y="0.0" width="1" height="1" fill="#555"/><rect x="1.9" y="1.9" width="1" height="1" fill="#555"/><rect x="3.8" y="0.0" width="1" height="1" fill="#555"/><rect x="3.8" y="1.9" width="1" height="1" fill="#555"/><rect x="5.699999999999999" y="0.0" width="1" height="1" fill="#555"/><rect x="5.699999999999999" y="1.9" width="1" height="1" fill="#555"/></svg>
<div class="b" style="left:782px;top:537px;width:235.80px;height:16.00px;background:#3a3a3a;border-radius:3px;"></div><svg style="left:789.4px;top:542.2px;" width="3.4" height="5.6" viewBox="0 0 3.4 5.6"><path d="M.5 .4L2.8 2.8L.5 5.199999999999999" fill="none" stroke="#c8c8c8" stroke-width="1.1" stroke-linecap="round" stroke-linejoin="round"/></svg><span class="t" style="left:796.6px;top:539.50px;color:#e6e6e6;font-size:8px;">Grosor</span><svg style="left:1004.1px;top:543.7px;" width="7" height="3" viewBox="0 0 7 3"><rect x="0.0" y="0.0" width="1" height="1" fill="#555"/><rect x="0.0" y="1.9" width="1" height="1" fill="#555"/><rect x="1.9" y="0.0" width="1" height="1" fill="#555"/><rect x="1.9" y="1.9" width="1" height="1" fill="#555"/><rect x="3.8" y="0.0" width="1" height="1" fill="#555"/><rect x="3.8" y="1.9" width="1" height="1" fill="#555"/><rect x="5.699999999999999" y="0.0" width="1" height="1" fill="#555"/><rect x="5.699999999999999" y="1.9" width="1" height="1" fill="#555"/></svg>
<div class="b" style="left:782px;top:554.6px;width:235.80px;height:13.40px;background:#3a3a3a;border-radius:3px;"></div><svg style="left:789.4px;top:558.5px;" width="3.4" height="5.6" viewBox="0 0 3.4 5.6"><path d="M.5 .4L2.8 2.8L.5 5.199999999999999" fill="none" stroke="#c8c8c8" stroke-width="1.1" stroke-linecap="round" stroke-linejoin="round"/></svg><span class="t" style="left:796.6px;top:555.80px;color:#e6e6e6;font-size:8px;">Configuración</span><svg style="left:1004.1px;top:560.0px;" width="7" height="3" viewBox="0 0 7 3"><rect x="0.0" y="0.0" width="1" height="1" fill="#555"/><rect x="0.0" y="1.9" width="1" height="1" fill="#555"/><rect x="1.9" y="0.0" width="1" height="1" fill="#555"/><rect x="1.9" y="1.9" width="1" height="1" fill="#555"/><rect x="3.8" y="0.0" width="1" height="1" fill="#555"/><rect x="3.8" y="1.9" width="1" height="1" fill="#555"/><rect x="5.699999999999999" y="0.0" width="1" height="1" fill="#555"/><rect x="5.699999999999999" y="1.9" width="1" height="1" fill="#555"/></svg>
<div class="b" style="left:1019.2px;top:150px;width:2.40px;height:222.00px;background:#464646;border-radius:1px;"></div>
</div></div>
<svg style="left:4.2px;top:562.2px;" width="8" height="11.5" viewBox="0 0 8 11.5"><rect x=".6" y=".6" width="6.6" height="10.3" rx="2" fill="none" stroke="#b8b8b8" stroke-width=".9"/><path d="M.6 5V2.6A2 2 0 0 1 2.6 .6H3.9V5Z" fill="#c8c8c8"/></svg>
<span class="t" style="left:13.2px;top:562.50px;color:#b4b4b4;font-size:8px;letter-spacing:-.05px;">Seleccionar</span>
<svg style="left:61.2px;top:562.2px;" width="8" height="11.5" viewBox="0 0 8 11.5"><rect x=".6" y=".6" width="6.6" height="10.3" rx="2" fill="none" stroke="#b8b8b8" stroke-width=".9"/><rect x="2.8" y="1.4" width="2.2" height="3.8" rx=".9" fill="#c8c8c8"/></svg>
<span class="t" style="left:70px;top:562.50px;color:#b4b4b4;font-size:8px;">Rotar vista</span>
<svg style="left:114.6px;top:562.2px;" width="8" height="11.5" viewBox="0 0 8 11.5"><rect x=".6" y=".6" width="6.6" height="10.3" rx="2" fill="none" stroke="#b8b8b8" stroke-width=".9"/><path d="M7.2 5V2.6A2 2 0 0 0 5.2 .6H3.9V5Z" fill="#c8c8c8"/></svg>
<span class="t" style="left:123.4px;top:562.50px;color:#b4b4b4;font-size:8px;">Opciones</span>
<svg style="left:977.5px;top:563px;" width="10" height="10" viewBox="0 0 10 10"><circle cx="5" cy="5" r="3.8" fill="none" stroke="#9a9a9a" stroke-width=".9"/><path d="M2.4 3C4 3.6 3.6 5 5 5.4C6 5.8 5.6 7.2 4.6 8.6" fill="none" stroke="#9a9a9a" stroke-width=".8"/><path d="M.8 .8L9.2 9.2" stroke="#9a9a9a" stroke-width=".9"/></svg>
<div class="b" style="left:993px;top:563px;width:0.80px;height:10.00px;background:#6a6a6a;border-radius:0px;"></div>
<span class="t" style="left:996.8px;top:562.50px;color:#9a9a9a;font-size:8px;">5.0.1</span>
</body></html>
